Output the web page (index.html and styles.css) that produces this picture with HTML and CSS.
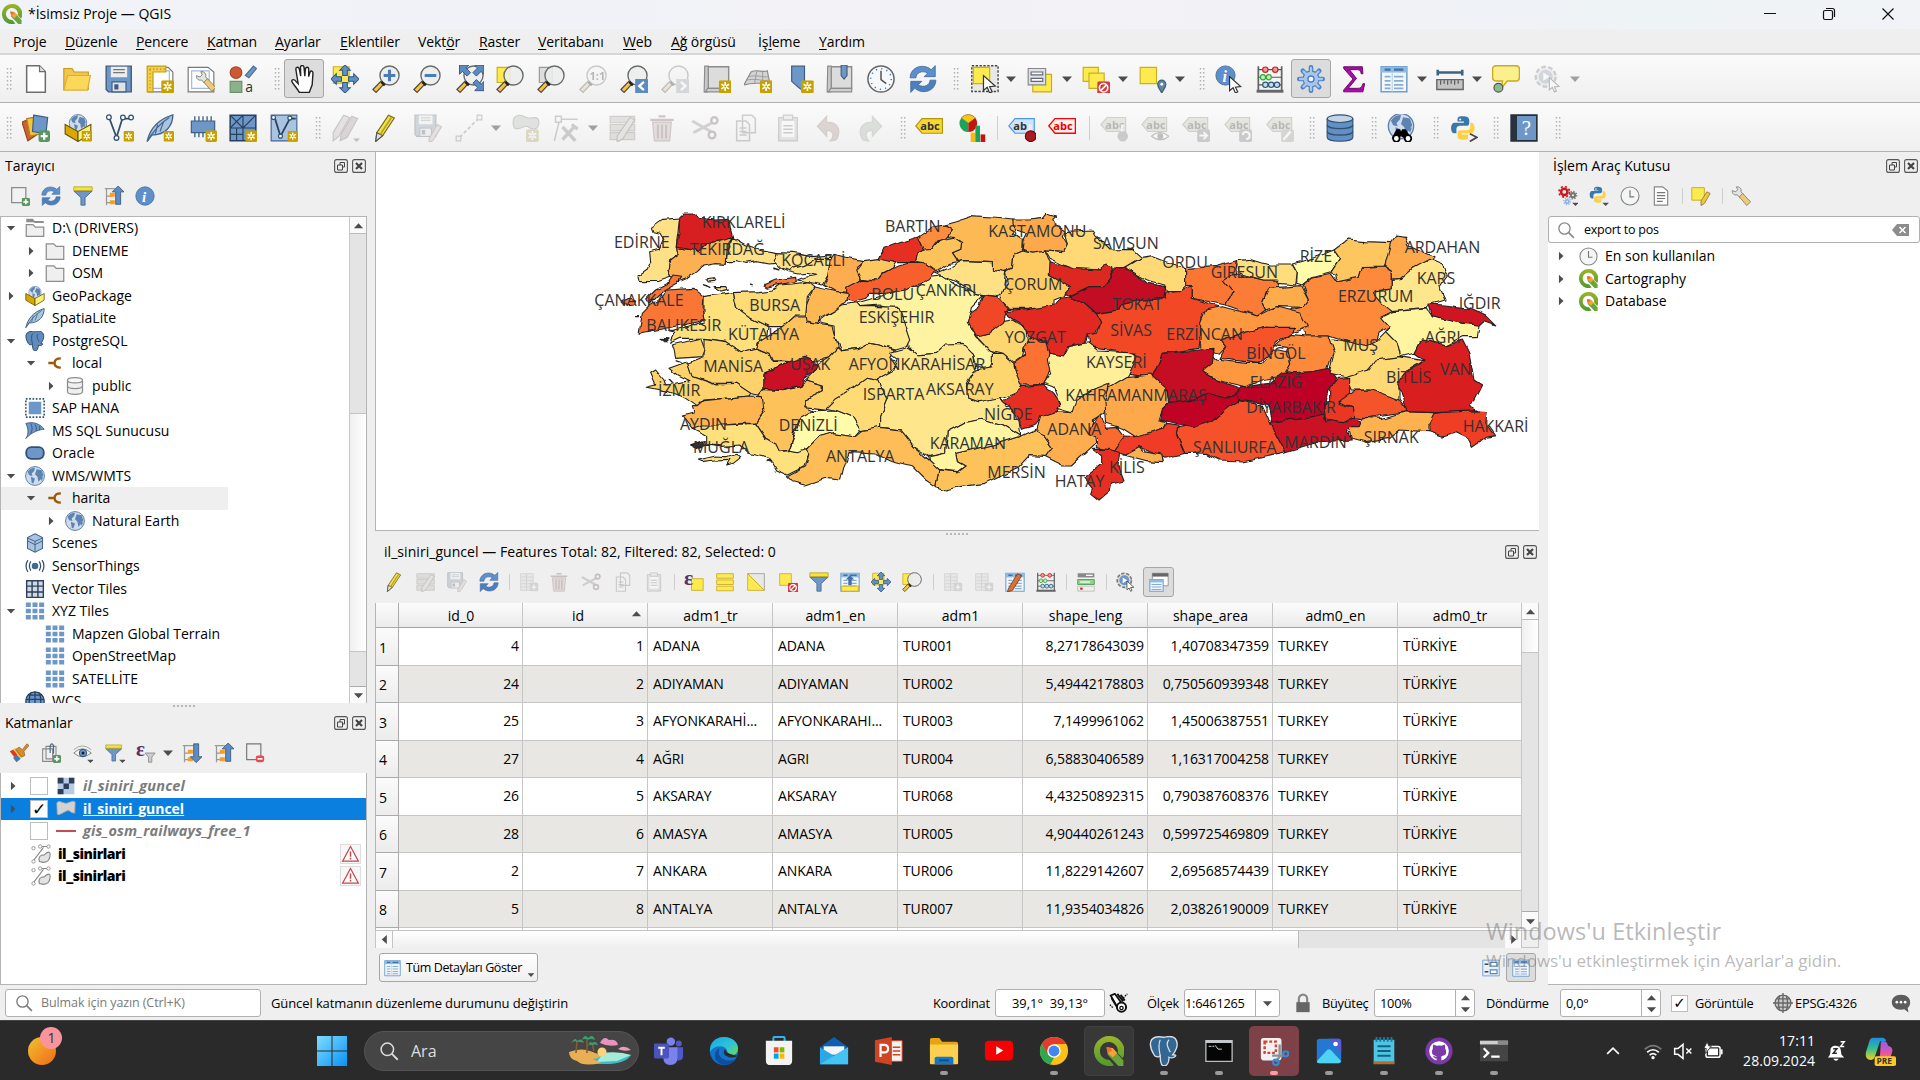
FILE: index.html
```html
<!DOCTYPE html>
<html lang="tr">
<head>
<meta charset="utf-8">
<title>*İsimsiz Proje — QGIS</title>
<link rel="stylesheet" href="styles.css">
</head>
<body>
<svg class="grads" width="0" height="0">
<defs>
<linearGradient id="gw" x1="0" y1="0" x2="1" y2="1"><stop offset="0" stop-color="#7fdcff"/><stop offset="1" stop-color="#0a93f5"/></linearGradient>
<linearGradient id="go" x1="0" y1="0" x2="1" y2="1"><stop offset="0" stop-color="#f2c230"/><stop offset="1" stop-color="#f06a14"/></linearGradient>
<linearGradient id="ge" x1="0" y1="0" x2="1" y2="1"><stop offset="0" stop-color="#1ba5e8"/><stop offset=".55" stop-color="#2cc3d8"/><stop offset="1" stop-color="#6fe04e"/></linearGradient>
<linearGradient id="gq" x1="0" y1="0" x2="0" y2="1"><stop offset="0" stop-color="#9bb52b"/><stop offset="1" stop-color="#4f9a2e"/></linearGradient>
<linearGradient id="gc" x1="0" y1="0" x2="0" y2="1"><stop offset="0" stop-color="#1a8be8"/><stop offset=".5" stop-color="#36c08d"/><stop offset="1" stop-color="#f3d21c"/></linearGradient>
<linearGradient id="gp" x1="0" y1="0" x2="0" y2="1"><stop offset="0" stop-color="#8a62f0"/><stop offset=".5" stop-color="#e254a8"/><stop offset="1" stop-color="#fb8a45"/></linearGradient>
</defs>
</svg>
<svg class="sprite" width="0" height="0">
<symbol id="star" viewBox="0 0 10 10"><rect width="10" height="10" rx="1.2" fill="#c8a000"/><path d="M5 1.5v7M2 3.2l6 3.6M8 3.2L2 6.8" stroke="#fff" stroke-width="1.3"/><circle cx="5" cy="5" r=".8" fill="#c8a000"/></symbol>
<symbol id="plus" viewBox="0 0 10 10"><rect width="10" height="10" rx="2" fill="#5a9660"/><path d="M5 2v6M2 5h6" stroke="#fff" stroke-width="2"/></symbol>
<symbol id="td" viewBox="0 0 12 12"><path d="M1 3.500h10L6 9z" fill="#4d4d4d"/></symbol>
<symbol id="tu" viewBox="0 0 12 12"><path d="M1 9h10L6 3.500z" fill="#4d4d4d"/></symbol>
<symbol id="tr" viewBox="0 0 12 12"><path d="M3.500 1v10L9 6z" fill="#4d4d4d"/></symbol>
<symbol id="tl" viewBox="0 0 12 12"><path d="M8.500 1v10L3 6z" fill="#4d4d4d"/></symbol>
<symbol id="grip" viewBox="0 0 6 22"><path d="M1.500 0v22M4.700 0v22" stroke="#b0b0b0" stroke-width="1.400" stroke-dasharray="1.500 2.500"/></symbol>
<symbol id="qgis" viewBox="0 0 24 24"><path fill="url(#gq)" fill-rule="evenodd" d="M12 0a12 12 0 1 0 4 23.300l-3.600-4.200A7.200 7.200 0 1 1 18.900 13.500l4 4.200A12 12 0 0 0 12 0z"/><path d="M10.500 9.500l4.500.5 8.500 9.500V24h-4L11 15z" fill="#6ba53a"/><path d="M10 9l5 .5 3.500 4-3.500 3.500L11 13.500z" fill="#f5a43a"/><path d="M10 9l3 .3 1.500 2-2.500 2-1.500-1z" fill="#ee6f2d"/></symbol>
<symbol id="new" viewBox="0 0 24 24"><path d="M4 .7h11l5 5v17.600H4z" fill="#fff" stroke="#6d6d6d" stroke-width="1.300"/><path d="M15 .7v5h5" fill="#ddd" stroke="#6d6d6d"/></symbol>
<symbol id="open" viewBox="0 0 24 24"><path d="M.7 21V3h7l2 3h12v15z" fill="#f2c64b" stroke="#c99a1c"/><path d="M.7 21.500L4 9h19.500l-2.500 12.500z" fill="#fbd859" stroke="#dcae34"/></symbol>
<symbol id="save" viewBox="0 0 24 24"><path d="M1 1h21.500v22H3l-2-2z" fill="#6c97c8" stroke="#3f5d7f" stroke-width="1.200"/><path d="M5 1.500h14v9H5z" fill="#ededed"/><path d="M7 4h10M7 6.500h10" stroke="#777"/><path d="M6 14.500h12V23H6z" fill="#dfe3e8" stroke="#3f5d7f"/><path d="M8 16.500h3.500V21H8z" fill="#3f5d7f"/></symbol>
<symbol id="layout" viewBox="0 0 24 24"><path d="M2 2h17l4 4v17H2z" fill="#fff" stroke="#777"/><path d="M5 5h15v15H5z" fill="none" stroke="#9fb9dd"/><path d="M1 1h16v5H6v17H1z" fill="#f4cf45" stroke="#c19d14"/><path d="M3 3.500h13M3.500 4v17" stroke="#a98a15" stroke-dasharray="1 2"/><use href="#star" x="13" y="13" width="11" height="11"/></symbol>
<symbol id="wrench" viewBox="0 0 24 24"><path d="M1.500 5.500l4 1.500 2.500-2.500L6.500 1c4-.5 6.500 2.500 5.500 6l3 3-4.500 4-3-3.500C4 11.500 1 9 1.500 5.500z" fill="#e4e4e0" stroke="#777"/><path d="M10 13l4-4 9.500 10-4.500 4.500z" fill="#eccb7c" stroke="#8d7a48"/></symbol>
<symbol id="mgr" viewBox="0 0 24 24"><path d="M1 2h17l5 4v17H1z" fill="#fff" stroke="#777"/><path d="M4 5h15v15H4z" fill="none" stroke="#9fb9dd"/><use href="#wrench" x="7" y="4" width="18" height="20"/></symbol>
<symbol id="style" viewBox="0 0 24 24"><circle cx="6" cy="6.500" r="5" fill="#cb5a34" stroke="#a94627"/><path d="M1 14h10v9.500H1z" fill="#8bb08a" stroke="#6c906c"/><path d="M14 9L21 1l2.500 2L17 11z" fill="#6c97c8" stroke="#4a6d99"/><text x="14" y="23.500" font-size="12" class="gl">a</text></symbol>
<symbol id="hand" viewBox="0 0 24 24"><path d="M8 23.500c-2-4-5.500-7-6.500-9.500 0-2 2.500-2 4 .5L7 16 5 3.500c0-2 2.500-2.200 3 0l1.200 6L9 1.800c.2-1.800 2.600-1.800 3 0l.7 7.700.6-6.500c.5-1.600 2.500-1.400 2.700.2L16 10l1.200-4c.8-1.500 2.500-.8 2.500 1L19 17l-2.500 6.500z" fill="#fff" stroke="#222" stroke-width="1.200"/></symbol>
<symbol id="arr4" viewBox="0 0 24 24"><path d="M12 0l4.500 4.500H14V9h-4V4.500H7.500zM12 24l4.500-4.500H14V15h-4v4.500H7.500zM0 12l4.500-4.500V10H9v4H4.500v2.500zM24 12l-4.500-4.500V10H15v4h4.500v2.500z" fill="#6090c8" stroke="#37587e" stroke-width=".9"/></symbol>
<symbol id="pansel" viewBox="0 0 24 24"><path d="M2 1.500h13.500v14H2z" fill="#fdea4e" stroke="#c9b022"/><use href="#arr4"/></symbol>
<symbol id="lens" viewBox="0 0 24 24"><path d="M.8 21L8 13.500l2.500 2.500L3.500 23.500z" fill="#f4c63d" stroke="#544"/><circle cx="15" cy="9" r="8.200" fill="#eceeee" fill-opacity=".88" stroke="#6b6b6b" stroke-width="1.200"/><path d="M8 14.500l3 3" stroke="#222" stroke-width="2.200"/></symbol>
<symbol id="zin" viewBox="0 0 24 24"><use href="#lens"/><path d="M15 4v10M10 9h10" stroke="#4a7db8" stroke-width="2.600"/></symbol>
<symbol id="zout" viewBox="0 0 24 24"><use href="#lens"/><path d="M10 9h10" stroke="#4a7db8" stroke-width="2.600"/></symbol>
<symbol id="zfull" viewBox="0 0 24 24"><use href="#lens"/><path d="M3 0h8L8.500 2.500l4 4-3 3-4-4L3 8zM24 0h-8l2.500 2.500-4 4 3 3 4-4L24 8zM24 22v-8l-2.500 2.500-4-4-3 3 4 4L16 22z" fill="#5b8bc2" stroke="#35557c" stroke-width=".8"/></symbol>
<symbol id="zsel" viewBox="0 0 24 24"><path d="M1 2h11v13H1z" fill="#fdea4e" stroke="#c9b022"/><use href="#lens"/></symbol>
<symbol id="zlay" viewBox="0 0 24 24"><path d="M2 2h11v13H2z" fill="#ddd" stroke="#999"/><use href="#lens"/></symbol>
<symbol id="z11" viewBox="0 0 24 24"><use href="#lens"/><text x="9" y="13" font-size="9.500" class="gl b">1:1</text></symbol>
<symbol id="zlast" viewBox="0 0 24 24"><use href="#lens"/><path d="M13 12h11v12H13z" fill="#5b8bc2"/><path d="M20.500 14.500l-4 3.500 4 3.500" fill="none" stroke="#fff" stroke-width="2"/></symbol>
<symbol id="znext" viewBox="0 0 24 24"><use href="#lens"/><path d="M13 12h11v12H13z" fill="#8ba0b8"/><path d="M17 14.500l4 3.500-4 3.500" fill="none" stroke="#fff" stroke-width="2"/></symbol>
<symbol id="map" viewBox="0 0 24 24"><path d="M4.500 1.500H22V20H4.500z" fill="#dcdcdc" stroke="#8c8c8c" stroke-width="1.200"/><path d="M1.500 1h3v19l-.5 3h-3z" fill="#c8c8c8" stroke="#8c8c8c"/><path d="M4 20h18v3H2z" fill="#cfcfcf" stroke="#8c8c8c"/></symbol>
<symbol id="nmap" viewBox="0 0 24 24"><use href="#map"/><use href="#star" x="13.500" y="13" width="11" height="11"/></symbol>
<symbol id="n3d" viewBox="0 0 24 24"><path d="M6 6c5-3 10 1 14-1l2 10c-7 2-12-1-22 2z" fill="#d4d4d4" stroke="#8c8c8c"/><path d="M11 5l-2 11M16 5v11M4 10c7-2 12 1 17 0M2 13c8-2 13 1 19 0" fill="none" stroke="#999" stroke-width=".8"/><use href="#star" x="13.500" y="13" width="11" height="11"/></symbol>
<symbol id="nbm" viewBox="0 0 24 24"><path d="M4 1h11v22l-5.500-4L4 14z" fill="#6c97c8" stroke="#3f5d7f"/><use href="#star" x="12" y="13" width="11" height="11"/></symbol>
<symbol id="sbm" viewBox="0 0 24 24"><use href="#map"/><path d="M13 0h5v9l-2.500 3L13 9z" fill="#6c97c8" stroke="#3f5d7f"/></symbol>
<symbol id="clock" viewBox="0 0 24 24"><circle cx="12" cy="12" r="11.200" fill="#f6f8fa" stroke="#666" stroke-width="1.300"/><circle cx="12" cy="12" r="8.800" fill="none" stroke="#3b78b8" stroke-width="1.300" stroke-dasharray="1 3.600"/><path d="M12 5v7.500l4.500 3.500" fill="none" stroke="#555" stroke-width="1.300"/></symbol>
<symbol id="sync" viewBox="0 0 24 24"><path d="M1 11C1 2 12-2 19 4l3.500-3.500V10H13l3-3C11 4 6 7 6 11z" fill="#5c8fcb" stroke="#41699a" stroke-width=".7"/><path d="M23 13c0 9-11 13-18 7l-3.500 3.500V14H11l-3 3c5 3 10 0 10-4z" fill="#4c7fc0" stroke="#41699a" stroke-width=".7"/></symbol>
<symbol id="cur" viewBox="0 0 12 16"><path d="M1 1v12l3-2.500L6 15l2-1-2-4 4.500-.5z" fill="#fff" stroke="#333"/></symbol>
<symbol id="sel" viewBox="0 0 24 24"><path d="M.7.700h22.500v22H.7z" fill="#e8e8e8" stroke="#444" stroke-width="1.200" stroke-dasharray="2 1.300"/><path d="M2 2h14v14H2z" fill="#fdea4e" stroke="#c9b022"/><use href="#cur" x="9" y="8" width="14" height="17"/></symbol>
<symbol id="self" viewBox="0 0 24 24"><path d="M5 8h16v15H5z" fill="#fdea4e" stroke="#c9a822"/><path d="M1 3h15v14H1z" fill="#dde2e8" stroke="#888"/><path d="M3.500 6h10v2.500h-10zM3.500 11.500h10V14h-10z" fill="#fff" stroke="#667"/></symbol>
<symbol id="desel" viewBox="0 0 24 24"><path d="M1 2h13v12H1z" fill="#fdea4e" stroke="#c9b022"/><path d="M6 7h13v13H6z" fill="#fdea4e" stroke="#c9b022"/><use href="#ban" x="13" y="14" width="11" height="11"/></symbol>
<symbol id="ban" viewBox="0 0 11 11"><rect width="11" height="11" rx="1.500" fill="#d9363c"/><circle cx="5.500" cy="5.500" r="3.600" fill="none" stroke="#fff" stroke-width="1.400"/><path d="M3 8l5-5" stroke="#fff" stroke-width="1.400"/></symbol>
<symbol id="desel1" viewBox="0 0 24 24"><path d="M2 2h14v14H2z" fill="#fdea4e" stroke="#c9b022"/><use href="#ban" x="12" y="13" width="12" height="12"/></symbol>
<symbol id="loc" viewBox="0 0 24 24"><path d="M1 2h14v14H1z" fill="#fdea4e" stroke="#c9b022"/><path d="M19.500 24c-2-4-3.500-5-3.500-7.500a3.500 3.500 0 0 1 7 0c0 2.500-1.500 3.500-3.500 7.500z" fill="#5d88a6" stroke="#3d6078"/><circle cx="19.500" cy="16.500" r="1.200" fill="#fff"/></symbol>
<symbol id="info" viewBox="0 0 24 24"><circle cx="12" cy="12" r="11" fill="#5e8fca" stroke="#44719f"/><text x="8.500" y="19" font-size="18" class="ser">i</text></symbol>
<symbol id="ident" viewBox="0 0 24 24"><use href="#info" x="0" y="0" width="18" height="18"/><use href="#cur" x="11" y="9" width="13" height="16"/></symbol>
<symbol id="abac" viewBox="0 0 24 24"><path d="M2 1v22M22 1v22" stroke="#666" stroke-width="1.500"/><path d="M2 4h20M2 10.500h20M2 17h20" stroke="#555"/><path d="M.5 22.500h23" stroke="#666" stroke-width="2.500"/><g fill="#e99" stroke="#c22"><circle cx="8" cy="4" r="2.300"/><circle cx="16.500" cy="4" r="2.300"/></g><g fill="#bdf0bd" stroke="#3a3"><circle cx="6" cy="10.500" r="2.200"/><circle cx="11" cy="10.500" r="2.200"/></g><g fill="#bcdcf5" stroke="#357"><circle cx="8" cy="17" r="2.300"/><circle cx="13" cy="17" r="2.300"/><circle cx="18" cy="17" r="2.300"/></g></symbol>
<symbol id="gear" viewBox="0 0 24 24"><g stroke="#4d80c4" stroke-width="4" stroke-linecap="round"><path d="M12 2v20M2 12h20M5 5l14 14M19 5L5 19"/></g><circle cx="12" cy="12" r="6.800" fill="#a9c6ea" stroke="#4d80c4"/><g stroke="#a9c6ea" stroke-width="2" stroke-linecap="round"><path d="M12 2.500v4M12 17.500v4M2.500 12h4M17.500 12h4M5.500 5.500l3 3M15.500 15.500l3 3M18.500 5.500l-3 3M8.500 15.500l-3 3"/></g><circle cx="12" cy="12" r="2.600" fill="#f3f6fb" stroke="#4d80c4" stroke-width="1.200"/></symbol>
<symbol id="sigma" viewBox="0 0 24 24"><path d="M4 1.500h16l.5 6H19c-.5-3-1.500-3.500-4-3.500H9l6 7.500-7 8.500h8c3 0 3.500-1 4.500-4H22l-1.500 7H4v-1.500l8-9.500-8-9z" fill="#a50da5" stroke="#650865" stroke-width=".8"/></symbol>
<symbol id="tab" viewBox="0 0 24 24"><path d="M1 1.500h22v21.500H1z" fill="#f3f7fb" stroke="#6fa0cc" stroke-width="1.300"/><path d="M1 1.500h22v5H1z" fill="#8fbbe2"/><path d="M4 4h5M12 4h8" stroke="#3e72ac" stroke-width="1.800"/><path d="M4 10h5M12 10h8M4 13.500h5M12 13.500h8M4 17h5M12 17h8M4 20h5M12 20h8" stroke="#86add2" stroke-width="1.500"/><path d="M10.500 6v17" stroke="#bcd3e8"/></symbol>
<symbol id="meas" viewBox="0 0 24 24"><path d="M1.500 6.500h21M1.500 4v5M22.500 4v5" stroke="#3d6488" stroke-width="2.200"/><path d="M.7 12.500h22.600v8.500H.7z" fill="#c4c4c4" stroke="#666" stroke-width="1.200"/><path d="M4 13v4M7 13v3M10 13v4M13 13v3M16 13v4M19 13v3" stroke="#555"/></symbol>
<symbol id="tips" viewBox="0 0 24 24"><path d="M3.500.7h17q3 0 3 3v7q0 3-3 3H13L8 20l1-6.300H3.500q-3 0-3-3v-7q0-3 3-3z" fill="#fcf08e" stroke="#c9a822" stroke-width="1.200"/><circle cx="5.500" cy="19.500" r="3.800" fill="#8bbb8a" stroke="#555"/></symbol>
<symbol id="act" viewBox="0 0 24 24"><circle cx="10" cy="10" r="8.500" fill="#ddd" stroke="#777" stroke-width="2" stroke-dasharray="4 2"/><circle cx="10" cy="10" r="6" fill="#6c97c8"/><path d="M8 6.500v7l5.500-3.500z" fill="#fff"/><use href="#cur" x="12" y="10" width="11" height="14"/></symbol>
<symbol id="dsm" viewBox="0 0 24 24"><path d="M0 7l9-4 5 14-9 6z" fill="#cd6133" stroke="#96441f"/><path d="M4 4l11-2 1 15-9 2z" fill="#f2c53a" stroke="#a98720"/><path d="M10 1l12 2-1.500 14L9 15z" fill="#6c97c8" stroke="#3f5d7f"/><use href="#plus" x="14" y="14" width="10" height="10"/></symbol>
<symbol id="globe" viewBox="0 0 24 24"><circle cx="12" cy="12" r="11.300" fill="#cfdcec" stroke="#5c82aa" stroke-width="1.200"/><path d="M3 7c3-4 6-5 9-5l-1 4-3 3 1 3-4-1zM7 13l5 2-2 6-2-1zM14 4l6 1 2 6-3 5-3 3-1-6-3-3zM19 15l3-2-2 5z" fill="#5d83b3"/></symbol>
<symbol id="gpkgb" viewBox="0 0 24 24"><use href="#globe" x="4" y="0" width="16" height="16"/><path d="M1 9l11 6v8.500L1 17z" fill="#d9a900" stroke="#6b5612"/><path d="M23 9l-11 6v8.500L23 17z" fill="#fbf07a" stroke="#6b5612"/></symbol>
<symbol id="gpkg" viewBox="0 0 24 24"><use href="#gpkgb"/><use href="#star" x="15" y="14" width="9" height="10"/></symbol>
<symbol id="shp" viewBox="0 0 24 24"><path d="M3 4l6 16 5-16h8" fill="none" stroke="#33516f" stroke-width="1.500"/><g fill="#fff" stroke="#33516f" stroke-width="1.100"><circle cx="2.500" cy="2.800" r="2"/><circle cx="9" cy="20.500" r="2"/><circle cx="14.500" cy="3" r="2"/><circle cx="21.500" cy="3" r="2"/></g><use href="#star" x="15" y="14" width="9" height="10"/></symbol>
<symbol id="fea0" viewBox="0 0 24 24"><path d="M1 23.500C3 14 9 5 23 .7 23 10 17 18 5 18z" fill="#a9c3e1" stroke="#44678e" stroke-width="1.200"/><path d="M1 23.500C6 15 12 8 20 3M8 17l2-8M12 15l3-8" fill="none" stroke="#44678e"/></symbol>
<symbol id="fea" viewBox="0 0 24 24"><use href="#fea0"/><use href="#star" x="15" y="14" width="9" height="10"/></symbol>
<symbol id="mem" viewBox="0 0 24 24"><path d="M5 2v18M8.500 2v18M12 2v18M15.500 2v18M19 2v18" stroke="#44678e" stroke-width="1.200"/><path d="M2 6h20v10H2z" fill="#6c97c8" stroke="#3f5d7f"/><use href="#star" x="14" y="14" width="10" height="10"/></symbol>
<symbol id="mesh" viewBox="0 0 24 24"><path d="M1 1h22v22H1z" fill="#6c97c8" stroke="#27415f" stroke-width="1.300"/><path d="M1 12h22M12 1v22M1 1l11 11M12 1L1 12M12 12L23 1M1 17.500h11M6.500 12v11" fill="none" stroke="#27415f"/><use href="#star" x="14" y="14" width="10" height="10"/></symbol>
<symbol id="vtx" viewBox="0 0 24 24"><path d="M1 1h22v22H1z" fill="#a9c3e1" stroke="#44678e"/><path d="M4 3l5 16 8-15h5" fill="none" stroke="#27415f" stroke-width="1.500"/><g fill="#fff" stroke="#33516f"><circle cx="3" cy="3" r="1.700"/><circle cx="9" cy="19" r="1.700"/><circle cx="17" cy="3.500" r="1.700"/></g><use href="#star" x="15" y="14" width="9" height="10"/></symbol>
<symbol id="pen" viewBox="0 0 24 24"><path d="M5 16L15 1l5 2.500-10 15-6 5z" fill="#f3df4c" stroke="#75691b"/><path d="M5 16l5 2.500-6 5z" fill="#ddd" stroke="#555"/><path d="M8 17.500L17.500 3" stroke="#b69f20" stroke-width="1.400"/></symbol>
<symbol id="pens" viewBox="0 0 24 24"><path d="M1 16L10 1l5 2-9 16-5 4z" fill="#c9b9b2" stroke="#857"/><path d="M8 17L17 2l5 2-9 16-6 3z" fill="#a9958e" stroke="#857"/><path d="M18 21h6l-3 3z" fill="#555"/></symbol>
<symbol id="savee" viewBox="0 0 24 24"><use href="#save" width="20" height="20"/><path d="M13 21l7-12 3.500 2L16 23l-3 1z" fill="#d9b9b0" stroke="#966"/></symbol>
<symbol id="dig" viewBox="0 0 24 24"><path d="M4 20L20 4" stroke="#777" stroke-width="1.500" stroke-dasharray="3 2"/><path d="M1 19h4v4H1zM19 1h4v4h-4z" fill="#eee" stroke="#777"/></symbol>
<symbol id="poly" viewBox="0 0 24 24"><path d="M1 7c0-8 8-6 11-4s11-3 11 4-6 7-9 4-13 8-13-4z" fill="#a8bda8" stroke="#777"/><use href="#star" x="12" y="13" width="11" height="11"/></symbol>
<symbol id="vert" viewBox="0 0 24 24"><path d="M3 2h5v5H3zM6 7L2 23M8 4.500h14" fill="none" stroke="#777" stroke-width="1.300"/><path d="M9 11l11 12M20 10L9 22M17 9l5 4" fill="none" stroke="#777" stroke-width="3"/></symbol>
<symbol id="mult" viewBox="0 0 24 24"><path d="M1 2h21v5.500H1zM1 9h21v5.500H1zM1 16h21v6H1z" fill="#bdb592" stroke="#877"/><path d="M7 19L18 3l4 2-10 16-5 3z" fill="#d2c2ba" stroke="#755"/></symbol>
<symbol id="trash" viewBox="0 0 24 24"><path d="M4 7h16l-1.500 16h-13z" fill="#dba7a7" stroke="#a55"/><path d="M2 5h20M9 2h6M8.500 9v12M12 9v12M15.500 9v12" stroke="#a55" stroke-width="1.800"/></symbol>
<symbol id="cut" viewBox="0 0 24 24"><path d="M1 6l16 9M2 16L19 7" stroke="#888" stroke-width="2.500"/><circle cx="20" cy="5.500" r="2.700" fill="none" stroke="#855" stroke-width="2"/><circle cx="18" cy="18" r="2.900" fill="none" stroke="#855" stroke-width="2"/></symbol>
<symbol id="copy" viewBox="0 0 24 24"><path d="M9 1h8l3 3v12H9zM4 6h8l3 3v14H4z" fill="#f3f3f3" stroke="#777" stroke-width="1.300"/><path d="M6.500 12h6M6.500 15h6M6.500 18h6" stroke="#777" stroke-width="1.400"/></symbol>
<symbol id="paste" viewBox="0 0 24 24"><path d="M4 3h16v20H4z" fill="#bbb" stroke="#777"/><path d="M6.500 6h11v14h-11z" fill="#fff"/><path d="M8 1h8v4H8z" fill="#ddd" stroke="#777"/><path d="M8 10h8M8 13h8M8 16h8" stroke="#777" stroke-width="1.300"/></symbol>
<symbol id="undo" viewBox="0 0 24 24"><path d="M10 2v5c8 0 13 5 9 14-1 2-4 2-6 2 4-4 3-9-3-9v5L2 10.500z" fill="#c08a70" stroke="#a87a60"/></symbol>
<symbol id="redo" viewBox="0 0 24 24"><path d="M14 2v5C6 7 1 12 5 21c1 2 4 2 6 2-4-4-3-9 3-9v5l8-8.500z" fill="#9fb29b" stroke="#8a9c86"/></symbol>
<symbol id="lab" viewBox="0 0 24 24"><path d="M6 4h17.500v12.500H6L.7 10.200z" fill="#f8d733" stroke="#b2950f"/><text x="4.500" y="13.500" font-size="9.500" class="gl b">abc</text></symbol>
<symbol id="labr" viewBox="0 0 24 24"><path d="M6 4h17.500v12.500H6L.7 10.200z" fill="#fff0f0" stroke="#f00" stroke-width="1.200"/><text x="4.500" y="13.500" font-size="9.500" class="gl b red">abc</text></symbol>
<symbol id="labp" viewBox="0 0 24 24"><path d="M6 4h16.500v12.500H6L.7 10.200z" fill="#cfe5ff" stroke="#4896e8"/><text x="4.500" y="13.500" font-size="9.500" class="gl b">ab</text><path d="M19 9v8" stroke="#eee" stroke-width="2.500"/><circle cx="19.500" cy="19" r="4.600" fill="#a81c20" stroke="#700"/></symbol>
<symbol id="labg" viewBox="0 0 24 24"><path d="M6 3h16v12H6L.7 9z" fill="#c8c49a" stroke="#88845c"/><text x="4.500" y="12.500" font-size="9.500" class="gl b">abc</text></symbol>
<symbol id="g1" viewBox="0 0 24 24"><use href="#labg"/><circle cx="19.500" cy="19" r="4.500" fill="#777"/><path d="M19 9v6" stroke="#eee" stroke-width="2.500"/></symbol>
<symbol id="g2" viewBox="0 0 24 24"><use href="#labg"/><path d="M9 19q7-6 15 0-7 6-15 0z" fill="#fff" stroke="#555"/><circle cx="16.500" cy="19" r="2.500" fill="#555"/></symbol>
<symbol id="g3" viewBox="0 0 24 24"><use href="#labg"/><rect x="13" y="13" width="11" height="11" rx="1.500" fill="#777"/><path d="M15 18.500h6M18.500 15.500l3 3-3 3" stroke="#fff" stroke-width="1.700" fill="none"/></symbol>
<symbol id="g4" viewBox="0 0 24 24"><use href="#labg"/><rect x="13" y="13" width="11" height="11" rx="1.500" fill="#777"/><path d="M16 18a3 3 0 1 1 3 3.500" stroke="#fff" stroke-width="1.700" fill="none"/></symbol>
<symbol id="g5" viewBox="0 0 24 24"><use href="#labg"/><rect x="13" y="13" width="11" height="11" rx="1.500" fill="#998"/><path d="M15 22l6-7" stroke="#fff" stroke-width="2" fill="none"/></symbol>
<symbol id="dia" viewBox="0 0 24 24"><path d="M8 8L2 3.500A7.500 7.500 0 0 1 14 3.500z" fill="#f8c812" stroke="#744" stroke-width=".5"/><path d="M8 8V15.500A7.500 7.500 0 0 1 2 3.500z" fill="#18a558"/><path d="M8 8V15.500A7.500 7.500 0 0 0 14 3.500z" fill="#c0140f"/><path d="M10 16h4v8h-4z" fill="#f8b812"/><path d="M14 10h4v14h-4z" fill="#18a558"/><path d="M18.500 17.500h4V24h-4z" fill="#c0140f"/></symbol>
<symbol id="db" viewBox="0 0 24 24"><path d="M1 4v16c0 4.500 22 4.500 22 0V4" fill="#6090c6" stroke="#33516f"/><ellipse cx="12" cy="4" rx="11" ry="3.300" fill="#c3d4e8" stroke="#33516f"/><path d="M1 9.500c0 4 22 4 22 0M1 15c0 4 22 4 22 0" fill="none" stroke="#33516f" stroke-width="1.200"/></symbol>
<symbol id="msrch" viewBox="0 0 24 24"><use href="#globe" x="0" y="-1" width="24" height="23"/><path d="M8 13l3 0 1 2 1-2h3l5 8h-6l-3-2-3 2H4z" fill="#000"/><g fill="#fff" stroke="#000" stroke-width="1.500"><circle cx="8" cy="21" r="2.800"/><circle cx="18" cy="21" r="2.800"/></g></symbol>
<symbol id="py" viewBox="0 0 24 24"><path d="M12 1c-5 0-5 1-5 5h6v1H4c-4 0-4 10 0 10h2v-3c0-3 1-4 4-4h5c2 0 3-1 3-3V5c0-3-2-4-6-4z" fill="#3a78ac"/><path d="M12 23c5 0 5-1 5-5h-6v-1h9c4 0 4-10 0-10h-1v4c0 2-1 3-4 3h-5c-2 0-3 1-3 3v3c0 2 2 3 5 3z" fill="#fed143"/><circle cx="9.500" cy="4" r="1" fill="#fff"/></symbol>
<symbol id="pyd" viewBox="0 0 24 24"><use href="#py" width="21" height="21"/><path d="M16 20h8l-4 4z" fill="#4d4d4d"/></symbol>
<symbol id="pyc" viewBox="0 0 24 24"><use href="#py" width="22" height="24"/><path d="M17 17l6 3-6 3.500" fill="none" stroke="#444" stroke-width="1.500"/></symbol>
<symbol id="help" viewBox="0 0 24 24"><path d="M1 1h22v22H1z" fill="#6c97c8" stroke="#262d38" stroke-width="1.400"/><path d="M1.500 1.500H6v21H1.500z" fill="#27343f"/><text x="10" y="18" font-size="18" class="ser n">?</text></symbol>
<symbol id="addl" viewBox="0 0 24 24"><path d="M2 2h17v18H2z" fill="#f2f2f2" stroke="#8a8a8a" stroke-width="1.500"/><use href="#plus" x="14" y="14" width="10" height="10"/></symbol>
<symbol id="filt" viewBox="0 0 24 24"><path d="M1 6h22l-8.500 8v9h-5v-9z" fill="#6c97c8" stroke="#44678e"/><path d="M1 1h22v4.500H1z" fill="#f8e33e" stroke="#b5a31c"/></symbol>
<symbol id="coll" viewBox="0 0 24 24"><path d="M1 3h12M3 3v20M3 12h6M3 20h6" stroke="#999" stroke-width="1.500"/><path d="M7 8h6v5H7zM7 17h6v5H7z" fill="#f59f2a"/><path d="M17 0l7 7h-4v15h-6V7h-4z" fill="#5b8bc2" stroke="#35557c"/></symbol>
<symbol id="expd" viewBox="0 0 24 24"><path d="M1 3h13M3 3v20M3 12h6M3 20h6" stroke="#999" stroke-width="1.500"/><path d="M7 8h6v5H7zM7 17h6v5H7z" fill="#f59f2a"/><path d="M17 23.500l7-7h-4V1h-6v15.500h-4z" fill="#5b8bc2" stroke="#35557c"/></symbol>
<symbol id="fold" viewBox="0 0 24 24"><path d="M1.500 22V3.500h9l3 3h9V22z" fill="#efefef" stroke="#8d8d8d" stroke-width="1.500"/></symbol>
<symbol id="drv" viewBox="0 0 24 24"><path d="M1.500 5V1h8l2 2.500h11V6H12l-2-1z" fill="#8d8d8d"/><path d="M1.500 22V8h8l3 3h10v11z" fill="#efefef" stroke="#8d8d8d" stroke-width="1.500"/></symbol>
<symbol id="pg" viewBox="0 0 24 24"><path d="M5 1c3-1 5 0 7 0s6-2 9 1c3 4 1 9-2 13 3 0 3 1 1 2s-4 0-4 0c0 3-1 7-4 7-2 0-3-3-3-8-1 1-4 1-5-1C1 10-1 3 5 1z" fill="#5f8cbd" stroke="#2f4c6e" stroke-width="1.200"/><path d="M9 3c-2 4-1 8 0 13M16 3c-3 3-1 6 1 10" fill="none" stroke="#2f4c6e"/></symbol>
<symbol id="pgt" viewBox="0 0 24 24"><path d="M5 1c3-1 5 0 7 0s6-2 9 1c3 4 1 9-2 13 3 0 3 1 1 2s-4 0-4 0c0 3-1 7-4 7-2 0-3-3-3-8-1 1-4 1-5-1C1 10-1 3 5 1z" fill="#336791" stroke="#d5dde6" stroke-width="1.100"/><path d="M9 3c-2 4-1 8 0 13M16 3c-3 3-1 6 1 10" fill="none" stroke="#d5dde6"/></symbol>
<symbol id="conn" viewBox="0 0 24 24"><path d="M4 12h7M19 6.500c-6 0-7.500 2-7.500 5.500s1.500 5.500 7.500 5.500" fill="none" stroke="#9a5a06" stroke-width="2.800"/></symbol>
<symbol id="sch" viewBox="0 0 24 24"><path d="M3 5v14c0 4 18 4 18 0V5" fill="#f0f0f0" stroke="#8d8d8d" stroke-width="1.500"/><ellipse cx="12" cy="5" rx="9" ry="3.200" fill="#f8f8f8" stroke="#8d8d8d" stroke-width="1.500"/><path d="M3 12c0 4 18 4 18 0" fill="none" stroke="#8d8d8d" stroke-width="1.500"/></symbol>
<symbol id="hana" viewBox="0 0 24 24"><path d="M4.500 4.500h15v15h-15z" fill="#6c97c8"/><path d="M1 1h22v22H1z" fill="none" stroke="#33516f" stroke-width="2" stroke-dasharray="2 2"/></symbol>
<symbol id="ms" viewBox="0 0 24 24"><path d="M1 3c9-3 18 1 22 7-5 0-15 3-22 11 4-6 3-12 0-18z" fill="#6c97c8" stroke="#33516f"/><path d="M7 3c2 4 2 8 0 12M12 4c2 3 2 6 1 8M17 6c1 2 1 3 0 5" fill="none" stroke="#33516f"/></symbol>
<symbol id="ora" viewBox="0 0 24 24"><rect x="1.500" y="5" width="21" height="14" rx="6" fill="#6c97c8" stroke="#33516f" stroke-width="2.200"/></symbol>
<symbol id="scene" viewBox="0 0 24 24"><path d="M12 1l9 4.500v13L12 23l-9-4.500v-13z" fill="#a9c3e1" stroke="#44678e" stroke-width="1.300"/><path d="M3 6l9 4 9-4M12 10v13M3 9.500L12 14l9-4.500" fill="none" stroke="#44678e" stroke-width="1.200"/></symbol>
<symbol id="sens" viewBox="0 0 24 24"><circle cx="12" cy="12" r="4" fill="#44678e"/><path d="M7 6.500q-3.500 5.500 0 11M3.500 5q-4.500 7 0 14M17 6.500q3.500 5.500 0 11M20.500 5q4.500 7 0 14" fill="none" stroke="#33516f" stroke-width="1.500"/></symbol>
<symbol id="vt" viewBox="0 0 24 24"><path d="M2 2h20v20H2zM8.500 2v20M15.500 2v20M2 8.500h20M2 15.500h20" fill="#cfdae8" stroke="#2f4058" stroke-width="1.700"/></symbol>
<symbol id="xyz" viewBox="0 0 24 24"><path d="M1 4.500h22M1 12h22M1 19.500h22" stroke="#6c97c8" stroke-width="5.500" stroke-dasharray="6 2"/></symbol>
<symbol id="wcs" viewBox="0 0 24 24"><circle cx="12" cy="12" r="11" fill="#6c97c8" stroke="#27415f" stroke-width="1.500"/><path d="M1 10h22M4 5h16M12 1v22M7 2q-4 10 0 20M17 2q4 10 0 20" fill="none" stroke="#27415f" stroke-width="1.500"/></symbol>
<symbol id="brush" viewBox="0 0 24 24"><path d="M1 10l7-4 8 9-7 8z" fill="#f4c43c"/><path d="M1 10l4-2 5 6-3 3z" fill="#d33"/><path d="M5 18l4-4 5 5-5 4z" fill="#47b"/><path d="M8 8l4-3 4 3 5.500-7 2.500 2-6 7 1 5-4 2z" fill="#d98a2d" stroke="#8c5a1c" stroke-width=".8"/></symbol>
<symbol id="grp" viewBox="0 0 24 24"><path d="M2 7h12v15H2zM6 4h12v15H6z" fill="#f0f0f0" stroke="#888" stroke-width="1.300"/><path d="M11 12V3q2-4 4 0v10" fill="none" stroke="#44678e" stroke-width="1.400"/><use href="#plus" x="14" y="14" width="10" height="10"/></symbol>
<symbol id="eye" viewBox="0 0 24 24"><path d="M1 12Q11 2 22 12 11 21 1 12z" fill="#f8f8f8" stroke="#888" stroke-width="1.200"/><circle cx="12" cy="12" r="4.500" fill="#6c97c8" stroke="#27415f"/><circle cx="12" cy="12" r="1.800" fill="#123"/><path d="M1 8Q11-1 22 8" fill="none" stroke="#999"/><path d="M17 20h8l-4 4z" fill="#4d4d4d"/></symbol>
<symbol id="filtd" viewBox="0 0 24 24"><use href="#filt" width="21" height="24"/><path d="M17 20h8l-4 4z" fill="#4d4d4d"/></symbol>
<symbol id="eps" viewBox="0 0 24 24"><text x="0" y="15" font-size="25" class="ser eps">ε</text><path d="M11 12h12l-4 5v6h-4v-6z" fill="#ccc" stroke="#888"/></symbol>
<symbol id="rem" viewBox="0 0 24 24"><path d="M2 1h17v19H2z" fill="#eee" stroke="#777" stroke-width="1.400"/><rect x="13" y="15" width="10" height="8" rx="2.500" fill="#e44b50"/><path d="M15 19h6" stroke="#fff" stroke-width="2"/></symbol>
<symbol id="ras" viewBox="0 0 24 24"><path d="M2 2h20v20H2z" fill="#b9cbe2"/><path d="M2 2h7v7H2zM15.500 2H22v7h-6.500zM9 9h6.500v6.500H9zM2 15.500h7V22H2z" fill="#2b4058"/></symbol>
<symbol id="pol" viewBox="0 0 24 24"><path d="M1 5c2-5 8 1 12 0s8-4 10-1l-.5 13c-5 0-6-4-9-3S2 21 1.500 18z" fill="#d2d2d2" stroke="#a5a5a5"/></symbol>
<symbol id="line" viewBox="0 0 24 24"><path d="M0 12h24" stroke="#bf4f55" stroke-width="2.500"/></symbol>
<symbol id="vec" viewBox="0 0 24 24"><path d="M3 20L15 4M10 3h10" stroke="#888" stroke-width="1.300"/><path d="M10 21q-2-8 6-8 6-6 7-1 0 10-8 10z" fill="#e3e3e3" stroke="#888" stroke-width="1.300"/><g fill="#fff" stroke="#888"><circle cx="3" cy="5" r="2"/><circle cx="3" cy="21" r="2"/><circle cx="11" cy="3" r="2"/><circle cx="21" cy="3" r="2"/></g></symbol>
<symbol id="warn" viewBox="0 0 24 24"><path d="M12 2L22.500 21.500h-21z" fill="#fff" stroke="#c0474c" stroke-width="1.600"/><path d="M12 8.500v7M12 17v2.200" stroke="#c0474c" stroke-width="2"/></symbol>
<symbol id="mag" viewBox="0 0 24 24"><circle cx="10" cy="10" r="7.500" fill="none" stroke="currentColor" stroke-width="1.800"/><path d="M15.500 15.500L22.500 22.500" stroke="currentColor" stroke-width="2.200"/></symbol>
<symbol id="flt" viewBox="0 0 14 14"><rect x=".6" y=".6" width="12.800" height="12.800" rx="2" fill="#eee" stroke="#555" stroke-width="1.100"/><path d="M3.500 6h5v5h-5zM6 6V3.500h4.500V8H8.500" fill="none" stroke="#444"/></symbol>
<symbol id="cls" viewBox="0 0 14 14"><rect x=".6" y=".6" width="12.800" height="12.800" rx="2" fill="#eee" stroke="#555" stroke-width="1.100"/><path d="M4 4l6 6M10 4l-6 6" stroke="#444" stroke-width="2.200"/></symbol>
<symbol id="selx" viewBox="0 0 24 24"><path d="M9 8h14v14H9z" fill="#fdea4e" stroke="#c9a822"/><text x="0" y="15" font-size="26" class="ser eps">ε</text></symbol>
<symbol id="sall" viewBox="0 0 24 24"><path d="M2 2h20v5.500H2zM2 9.500h20V15H2zM2 17h20v5.500H2z" fill="#fdea4e" stroke="#c9a822"/></symbol>
<symbol id="inv" viewBox="0 0 24 24"><path d="M2 2h20v20z" fill="#e8e8e8" stroke="#999"/><path d="M2 2l20 20H2z" fill="#fdea4e" stroke="#c9a822"/></symbol>
<symbol id="mtop" viewBox="0 0 24 24"><use href="#tab"/><path d="M2 17h20v6H2z" fill="#fdea4e" stroke="#c9a822"/><path d="M12 4l5 5h-3v7h-4V9H7z" fill="#3f6ea6"/></symbol>
<symbol id="coln" viewBox="0 0 24 24"><path d="M2 2h7v20H2zM9 2h8v20H9z" fill="#d8d8d8" stroke="#999"/><path d="M3 6h14M3 10h14M3 14h14M3 18h14" stroke="#999"/><rect x="13" y="13" width="10" height="10" rx="1.500" fill="#999"/><path d="M18 15v6M15 18h6" stroke="#fff" stroke-width="1.500"/></symbol>
<symbol id="tabe" viewBox="0 0 24 24"><use href="#tab"/><path d="M4 20L15 2l5 2.500L9 22l-6 2z" fill="#d97038" stroke="#7a3a18"/></symbol>
<symbol id="cond" viewBox="0 0 24 24"><path d="M2 1.500h20v5H2z" fill="#888"/><path d="M2 9h20v6H2z" fill="#8fd08f" stroke="#4a9a4a"/><path d="M2 17h20v6H2z" fill="#eee" stroke="#bbb"/><path d="M12 4h8" stroke="#fff" stroke-width="1.500"/><path d="M5 12h12" stroke="#fff" stroke-width="1.500"/><path d="M5 20h3" stroke="#c22" stroke-width="2.500"/></symbol>
<symbol id="dock" viewBox="0 0 24 24"><path d="M4 1.500h19v15H4z" fill="#fff" stroke="#888"/><path d="M4 1.500h19v4H4z" fill="#666"/><path d="M1 9h16v14H1z" fill="#f3f7fb" stroke="#6fa0cc" stroke-width="1.300"/><path d="M1 9h16v3.500H1z" fill="#8fbbe2"/><path d="M3 15h12M3 18h12M3 21h12" stroke="#86add2" stroke-width="1.400"/></symbol>
<symbol id="form" viewBox="0 0 24 24"><path d="M1 1.500h22v21H1z" fill="#e6f0fa" stroke="#7aa5d2" stroke-width="1.300"/><path d="M3.500 7h5M3.500 17h5" stroke="#444" stroke-width="2"/><path d="M11 4.500h9v5h-9zM11 14.500h9v5h-9z" fill="#fff" stroke="#5587bd" stroke-width="1.500"/></symbol>
<symbol id="gears" viewBox="0 0 24 24"><g fill="none"><circle cx="7.500" cy="7" r="3.800" stroke="#c8191f" stroke-width="3"/><circle cx="7.500" cy="7" r="6.300" stroke="#c8191f" stroke-width="2" stroke-dasharray="2.500 2.450"/><circle cx="18" cy="11" r="2.500" stroke="#777" stroke-width="2.500"/><circle cx="18" cy="11" r="4.500" stroke="#777" stroke-width="1.500" stroke-dasharray="1.700 1.800"/><circle cx="11" cy="18.500" r="2" stroke="#8fb0de" stroke-width="2"/><circle cx="11" cy="18.500" r="4" stroke="#8fb0de" stroke-width="1.500" stroke-dasharray="1.500 1.600"/></g><path d="M17 20h8l-4 4z" fill="#4d4d4d"/></symbol>
<symbol id="clk2" viewBox="0 0 24 24"><circle cx="12" cy="12" r="10.800" fill="#f4f6f6" stroke="#888" stroke-width="1.400"/><path d="M12 5v8h5" fill="none" stroke="#777" stroke-width="1.400"/></symbol>
<symbol id="doc" viewBox="0 0 24 24"><path d="M4 1h10l6 5v17H4z" fill="#fdfdfd" stroke="#888" stroke-width="1.400"/><path d="M7 8h10M7 11.500h10M7 15h10M7 18.500h7" stroke="#777" stroke-width="1.400"/></symbol>
<symbol id="edn" viewBox="0 0 24 24"><path d="M1 2h15v15H1z" fill="#fdea4e" stroke="#c9b022" stroke-width="1.200"/><path d="M12 18l7-11 4 2-7 12-4 2.500z" fill="#efc640" stroke="#8a7a3a"/></symbol>
<symbol id="lock" viewBox="0 0 24 24"><path d="M7 12V7a5 5 0 0 1 10 0v5" fill="none" stroke="#888" stroke-width="2.600"/><path d="M4 11h16v12H4z" fill="#666"/></symbol>
<symbol id="ext" viewBox="0 0 24 24"><path d="M2 3l5-2 8 11-5 5z" fill="#fff" stroke="#111" stroke-width="2.200"/><path d="M10 1l7 9M14 2l5 7M3 6l6 10" stroke="#111" stroke-width="2.200"/><circle cx="15" cy="17" r="5.500" fill="#fff" stroke="#111" stroke-width="2.400"/><circle cx="15" cy="18" r="2" fill="none" stroke="#111" stroke-width="1.600"/><path d="M17 6l5-5M1 14l4 4" stroke="#111" stroke-width="1.500" stroke-dasharray="2 1"/></symbol>
<symbol id="crs" viewBox="0 0 24 24"><circle cx="12" cy="12" r="9.500" fill="#ccc" stroke="#666" stroke-width="1.600"/><path d="M0 12h24M4 7h16M4 17h16M12 0v24M8 3q-3 9 0 18M16 3q3 9 0 18" fill="none" stroke="#666" stroke-width="1.600"/></symbol>
<symbol id="chat" viewBox="0 0 24 24"><path d="M12 2C5 2 1 6 1 11s4 9 11 9l4-.5 5 4-1-5.500c2-2 3-4 3-7 0-5-4-9-11-9z" fill="#5c5c5c"/><g fill="#fff"><circle cx="7" cy="11" r="1.600"/><circle cx="12" cy="11" r="1.600"/><circle cx="17" cy="11" r="1.600"/></g></symbol>
<symbol id="wx" viewBox="0 0 36 40"><circle cx="15" cy="24" r="14" fill="url(#go)"/><circle cx="24" cy="11" r="11" fill="#fa949c"/><text x="20.500" y="16" font-size="14" class="gl">1</text></symbol>
<symbol id="win" viewBox="0 0 30 30"><path d="M0 0h14.500v14.500H0zM15.500 0H30v14.500H15.500zM0 15.500h14.500V30H0zM15.500 15.500H30V30H15.500z" fill="url(#gw)"/></symbol>
<symbol id="beach" viewBox="0 0 64 32"><path d="M12 21q26-6 50-1-6 10-30 9Q14 28 12 21z" fill="#38bcd0"/><path d="M34 18q16-2 28 2l-14 6-20 1z" fill="#a5ecd8"/><path d="M0 17q14-6 28 2 8 3-4 5l8 4q-18 4-24-2-8-2-8-9z" fill="#e8b052"/><circle cx="33" cy="17" r="4.500" fill="#ffd27a"/><path d="M31 8q4-8 9-3 8-1 9 5-10 2-18-2z" fill="#e693bd"/><path d="M49 14q6-5 13 1-7 2-13-1z" fill="#ef9ab6"/><path d="M7 18l1-12M18 18V5M25 16l-2-8" stroke="#8a5a33" stroke-width="1.600"/><path d="M2 8q5-7 6-2 5-4 7 2-5-2-7-1-3-2-6 1zM13 5q3-7 6-2 5-5 7 2-5-2-7 0-4-2-6 0zM19 11q2-6 4-3 4-3 6 2-4-1-6 0-3-1-4 1z" fill="#38a070"/></symbol>
<symbol id="teams" viewBox="0 0 32 32"><circle cx="18" cy="6" r="4.500" fill="#7b83eb"/><circle cx="26.500" cy="8" r="3.200" fill="#5059c9"/><path d="M22 12h9v9q0 5-5 5h-4z" fill="#5059c9"/><path d="M10 12h15v11q0 8-7.500 8T10 23z" fill="#7b83eb"/><rect x="0" y="8" width="16" height="16" rx="1.500" fill="#4b53bc"/><path d="M4.500 12.500h7M8 12.500v8" stroke="#fff" stroke-width="2"/></symbol>
<symbol id="edge" viewBox="0 0 32 32"><circle cx="16" cy="16" r="15" fill="#1272cc"/><path d="M1 14C2 4 10 1 16 1c9 0 15 6 15 12 0 8-9 9-12 6 2-3-1-8-7-8-5 0-9 2-11 6z" fill="url(#ge)"/><path d="M11 13c-3 8 4 16 17 12-5 8-17 7-21 0-2-5 0-10 4-12z" fill="#0c4f9c"/><path d="M17 14q-3 4 1 7 6 4 13 0-3 0-9-2-4-2-5-5z" fill="#2a2a2a"/></symbol>
<symbol id="store" viewBox="0 0 32 32"><path d="M10 7V2.500q0-1.500 1.500-1.500h9Q22 1 22 2.500V7" fill="none" stroke="#2fb4f2" stroke-width="2.200"/><path d="M2 5h28v21q0 5-5 5H7q-5 0-5-5z" fill="#f3f3f3"/><path d="M10.500 12h5v5.500h-5z" fill="#f05022"/><path d="M16.700 12h5v5.500h-5z" fill="#7eba00"/><path d="M10.500 18.700h5v5.500h-5z" fill="#00a3ee"/><path d="M16.700 18.700h5v5.500h-5z" fill="#ffb800"/></symbol>
<symbol id="mail" viewBox="0 0 32 32"><path d="M1 12L16 1l15 11-15 10z" fill="#0c5db4"/><path d="M5 11h22v9H5z" fill="#f4f4f4"/><path d="M1 12l15 9 15-9v18H1z" fill="#29a9ea"/><path d="M1 30l30-18v18z" fill="#44c4f4"/></symbol>
<symbol id="ppt" viewBox="0 0 32 32"><path d="M18 5h12v22H18z" fill="#f6f2f0" stroke="#cf4422"/><path d="M20 12h8M20 16h8M20 20h8" stroke="#cf4422" stroke-width="1.600"/><path d="M1 4.500L19 1v30L1 27.500z" fill="#cf4422"/><path d="M7 22.500V9.500h4q4 0 4 4t-4 4H7" fill="none" stroke="#fff" stroke-width="2.300"/></symbol>
<symbol id="expl" viewBox="0 0 32 32"><path d="M1 4q0-2 2-2h8l3 4h15q2 0 2 2v10H1z" fill="#e5a513"/><path d="M1 9h30v20q0 1-1 1H2q-1 0-1-1z" fill="#fbcf4f"/><path d="M6 30v-6q0-2 2-2h16q2 0 2 2v6z" fill="#1577c7"/><path d="M11 26h10" stroke="#0b4f92" stroke-width="2"/></symbol>
<symbol id="yt" viewBox="0 0 32 32"><rect x="1" y="5" width="30" height="21" rx="4" fill="#f80000"/><path d="M13 11v9l7.500-4.500z" fill="#fff"/></symbol>
<symbol id="chr" viewBox="0 0 32 32"><circle cx="16" cy="16" r="15" fill="#fbc116"/><path d="M3 8.500a15 15 0 0 1 26 0H16L9 20z" fill="#e33b2e"/><path d="M3 8.500L9.500 20l6.500 3.500-4 7A15 15 0 0 1 3 8.500z" fill="#2da94f"/><circle cx="16" cy="16" r="7.200" fill="#fff"/><circle cx="16" cy="16" r="5.800" fill="#4285f4"/></symbol>
<symbol id="cmd" viewBox="0 0 32 32"><path d="M2 5h28v22H2z" fill="#050505" stroke="#b9bdc1" stroke-width="1.400"/><path d="M2 4.500h28v3H2z" fill="#c4c8cc"/><path d="M5 11h3M9 11h2M12 10l3 4h4" stroke="#ddd" fill="none"/></symbol>
<symbol id="snip" viewBox="0 0 32 32"><rect x="2" y="2" width="22" height="24" rx="3" fill="#f1f1f1"/><path d="M6 6h12v12H6z" fill="none" stroke="#d8412f" stroke-width="2.600" stroke-dasharray="3 2"/><path d="M14 21h13M22 9v13q-2 3-4 5" fill="none" stroke="#8b8f94" stroke-width="2.500"/><circle cx="18" cy="28" r="3" fill="none" stroke="#2e8de0" stroke-width="2.200"/><circle cx="28.500" cy="19" r="2.800" fill="none" stroke="#2e8de0" stroke-width="2.200"/></symbol>
<symbol id="phot" viewBox="0 0 32 32"><rect x="3" y="3" width="26" height="26" rx="3" fill="#2278d2"/><path d="M16 3h10q3 0 3 3v12z" fill="#5a5ad0"/><circle cx="23" cy="8.500" r="2.500" fill="#fff"/><path d="M3 27l11-12q2-2 4 0l11 12q-1 2-3 2H6q-3 0-3-2z" fill="#4fd3f2"/></symbol>
<symbol id="note" viewBox="0 0 32 32"><path d="M5 4h22v26H5z" fill="#4fc5e4"/><path d="M5 27h22v3H5z" fill="#c5661e"/><path d="M8 1v5M12 1v5M16 1v5M20 1v5M24 1v5" stroke="#1a7ca0" stroke-width="2"/><path d="M9 11h14M9 16h14M9 21h14" stroke="#13627f" stroke-width="2.200"/></symbol>
<symbol id="gh" viewBox="0 0 32 32"><circle cx="16" cy="16" r="14.500" fill="#7c3aa8"/><circle cx="16" cy="16" r="10.500" fill="#fff"/><path d="M10 9l3.500 1.500q3-.6 5.500 0L22 9q1 2 .5 4 4 7-4 8.500V27h-5v-3q-3 0-4-3 2 1 4 1v-.500Q6 20 9.500 13 9 11 10 9z" fill="#7c3aa8"/></symbol>
<symbol id="term" viewBox="0 0 32 32"><path d="M1 5h30v22H1z" fill="#454545"/><path d="M1 5h30v4H1z" fill="#cfcfcf"/><path d="M20 5h11v4H20z" fill="#8a8a8a"/><path d="M5 13l5 5-5 5M13 22h9" fill="none" stroke="#fff" stroke-width="2.400"/></symbol>
<symbol id="wifi" viewBox="0 0 24 24"><path d="M2 10q10-9 20 0" fill="none" stroke="#777" stroke-width="2"/><path d="M5 13.500q7-6 14 0M8 17q4-3.500 8 0" fill="none" stroke="#fff" stroke-width="2"/><circle cx="12" cy="20" r="2" fill="#fff"/></symbol>
<symbol id="mute" viewBox="0 0 24 24"><path d="M2 9h4l6-5v17l-6-5H2zM16 9l6 6M22 9l-6 6" fill="none" stroke="#fff" stroke-width="1.800"/></symbol>
<symbol id="bat" viewBox="0 0 24 24"><rect x="3.500" y="6.500" width="17" height="13" rx="2.500" fill="none" stroke="#fff" stroke-width="1.800"/><path d="M6 9h12v8H6z" fill="#fff"/><path d="M22.500 10v6" stroke="#fff" stroke-width="2"/><path d="M5 1L1 9h3l-1 6 7-9H7z" fill="#fff" stroke="#2a2a2a"/></symbol>
<symbol id="bell" viewBox="0 0 24 24"><path d="M3 19q3-2 3-8c0-6 10-6 11-1l1 6 3 3z" fill="#fff"/><path d="M9 20.500h6q-3 4-6 0z" fill="#fff"/><path d="M17 2h4l-4 5h4" fill="none" stroke="#fff" stroke-width="1.600"/><path d="M9 9.500h4l-4 5h4" fill="none" stroke="#2a2a2a" stroke-width="1.600"/></symbol>
<symbol id="cop" viewBox="0 0 36 36"><path d="M10 3h11q3 0 4 4l-7 0-6 18q-1 3-4 3-7 0-6-8L6 7q1-4 4-4z" fill="url(#gc)"/><path d="M19 7h3q4 0 5 5 5 1 5 6l-3 10q-1 4-6 4H12l6-9z" fill="url(#gp)"/><rect x="12" y="24" width="24" height="11" rx="2" fill="#ffc81f"/><text x="14" y="33" font-size="9.500" class="gl b">PRE</text></symbol>
</svg>

<header class="title"><svg class="i20"><use href="#qgis"/></svg><span>*İsimsiz Proje — QGIS</span>
<div class="caps"><svg viewBox="0 0 14 14"><path d="M1 6.500h12" stroke="#111"/></svg><svg viewBox="0 0 14 14"><rect x="1.500" y="3.500" width="9" height="9" rx="1.500" fill="none" stroke="#111" stroke-width="1.200"/><path d="M4 1.500h6.500q2 0 2 2V10" fill="none" stroke="#111" stroke-width="1.200"/></svg><svg viewBox="0 0 14 14"><path d="M1.500 1.500l11 11M12.500 1.500l-11 11" stroke="#111" stroke-width="1.200"/></svg></div></header>
<nav class="menu"><span>Pro<u>j</u>e</span><span><u>D</u>üzenle</span><span><u>P</u>encere</span><span><u>K</u>atman</span><span><u>A</u>yarlar</span><span><u>E</u>klentiler</span><span>Vekt<u>ö</u>r</span><span><u>R</u>aster</span><span><u>V</u>eritabanı</span><span><u>W</u>eb</span><span><u>A</u>ğ örgüsü</span><span>İş<u>l</u>eme</span><span><u>Y</u>ardım</span></nav>

<div class="bar bar1">
<svg class="grip"><use href="#grip"/></svg><svg><use href="#new"/></svg><svg><use href="#open"/></svg><svg><use href="#save"/></svg><svg><use href="#layout"/></svg><svg><use href="#mgr"/></svg><svg><use href="#style"/></svg><svg class="grip"><use href="#grip"/></svg><b class="on"><svg><use href="#hand"/></svg></b><svg><use href="#pansel"/></svg><svg><use href="#zin"/></svg><svg><use href="#zout"/></svg><svg><use href="#zfull"/></svg><svg><use href="#zsel"/></svg><svg><use href="#zlay"/></svg><svg class="off"><use href="#z11"/></svg><svg><use href="#zlast"/></svg><svg class="off"><use href="#znext"/></svg><svg><use href="#nmap"/></svg><svg><use href="#n3d"/></svg><svg><use href="#nbm"/></svg><svg><use href="#sbm"/></svg><svg><use href="#clock"/></svg><svg><use href="#sync"/></svg><svg class="grip"><use href="#grip"/></svg><svg><use href="#sel"/></svg><svg class="dd"><use href="#td"/></svg><svg><use href="#self"/></svg><svg class="dd"><use href="#td"/></svg><svg><use href="#desel"/></svg><svg class="dd"><use href="#td"/></svg><svg><use href="#loc"/></svg><svg class="dd"><use href="#td"/></svg><svg class="grip"><use href="#grip"/></svg><svg><use href="#ident"/></svg><svg><use href="#abac"/></svg><b class="on"><svg><use href="#gear"/></svg></b><svg><use href="#sigma"/></svg><svg><use href="#tab"/></svg><svg class="dd"><use href="#td"/></svg><svg><use href="#meas"/></svg><svg class="dd"><use href="#td"/></svg><svg><use href="#tips"/></svg><svg class="off"><use href="#act"/></svg><svg class="dd off2"><use href="#td"/></svg>
</div>
<div class="bar bar2">
<svg class="grip"><use href="#grip"/></svg><svg><use href="#dsm"/></svg><svg><use href="#gpkg"/></svg><svg><use href="#shp"/></svg><svg><use href="#fea"/></svg><svg><use href="#mem"/></svg><svg><use href="#mesh"/></svg><svg><use href="#vtx"/></svg><svg class="grip"><use href="#grip"/></svg><svg class="off"><use href="#pens"/></svg><svg><use href="#pen"/></svg><svg class="off"><use href="#savee"/></svg><svg class="off"><use href="#dig"/></svg><svg class="dd off2"><use href="#td"/></svg><svg class="off"><use href="#poly"/></svg><svg class="off"><use href="#vert"/></svg><svg class="dd off2"><use href="#td"/></svg><svg class="off"><use href="#mult"/></svg><svg class="off"><use href="#trash"/></svg><svg class="off"><use href="#cut"/></svg><svg class="off"><use href="#copy"/></svg><svg class="off"><use href="#paste"/></svg><svg class="off"><use href="#undo"/></svg><svg class="off"><use href="#redo"/></svg><svg class="grip"><use href="#grip"/></svg><svg><use href="#lab"/></svg><svg><use href="#dia"/></svg><i class="sep"></i><svg><use href="#labp"/></svg><svg><use href="#labr"/></svg><i class="sep"></i><svg class="off"><use href="#g1"/></svg><svg class="off"><use href="#g2"/></svg><svg class="off"><use href="#g3"/></svg><svg class="off"><use href="#g4"/></svg><svg class="off"><use href="#g5"/></svg><svg class="grip"><use href="#grip"/></svg><svg><use href="#db"/></svg><svg class="grip"><use href="#grip"/></svg><svg><use href="#msrch"/></svg><svg class="grip"><use href="#grip"/></svg><svg><use href="#pyc"/></svg><svg class="grip"><use href="#grip"/></svg><svg><use href="#help"/></svg><svg class="grip"><use href="#grip"/></svg>
</div>

<main>
<section class="left">
<div class="dockh"><span>Tarayıcı</span><svg><use href="#flt"/></svg><svg><use href="#cls"/></svg></div>
<div class="mini browse"><svg><use href="#addl"/></svg><svg><use href="#sync"/></svg><svg><use href="#filt"/></svg><svg><use href="#coll"/></svg><svg><use href="#info"/></svg></div>
<div class="treebox">
<ul class="tree">
<li><svg class="tw"><use href="#td"/></svg><svg class="i20"><use href="#drv"/></svg>D:\ (DRIVERS)</li>
<li class="l1"><svg class="tw"><use href="#tr"/></svg><svg class="i20"><use href="#fold"/></svg>DENEME</li>
<li class="l1"><svg class="tw"><use href="#tr"/></svg><svg class="i20"><use href="#fold"/></svg>OSM</li>
<li><svg class="tw"><use href="#tr"/></svg><svg class="i20"><use href="#gpkgb"/></svg>GeoPackage</li>
<li><i class="tw"></i><svg class="i20"><use href="#fea0"/></svg>SpatiaLite</li>
<li><svg class="tw"><use href="#td"/></svg><svg class="i20"><use href="#pg"/></svg>PostgreSQL</li>
<li class="l1"><svg class="tw"><use href="#td"/></svg><svg class="i20"><use href="#conn"/></svg>local</li>
<li class="l2"><svg class="tw"><use href="#tr"/></svg><svg class="i20"><use href="#sch"/></svg>public</li>
<li><i class="tw"></i><svg class="i20"><use href="#hana"/></svg>SAP HANA</li>
<li><i class="tw"></i><svg class="i20"><use href="#ms"/></svg>MS SQL Sunucusu</li>
<li><i class="tw"></i><svg class="i20"><use href="#ora"/></svg>Oracle</li>
<li><svg class="tw"><use href="#td"/></svg><svg class="i20"><use href="#globe"/></svg>WMS/WMTS</li>
<li class="l1 hov"><svg class="tw"><use href="#td"/></svg><svg class="i20"><use href="#conn"/></svg>harita</li>
<li class="l2"><svg class="tw"><use href="#tr"/></svg><svg class="i20"><use href="#globe"/></svg>Natural Earth</li>
<li><i class="tw"></i><svg class="i20"><use href="#scene"/></svg>Scenes</li>
<li><i class="tw"></i><svg class="i20"><use href="#sens"/></svg>SensorThings</li>
<li><i class="tw"></i><svg class="i20"><use href="#vt"/></svg>Vector Tiles</li>
<li><svg class="tw"><use href="#td"/></svg><svg class="i20"><use href="#xyz"/></svg>XYZ Tiles</li>
<li class="l1"><i class="tw"></i><svg class="i20"><use href="#xyz"/></svg>Mapzen Global Terrain</li>
<li class="l1"><i class="tw"></i><svg class="i20"><use href="#xyz"/></svg>OpenStreetMap</li>
<li class="l1"><i class="tw"></i><svg class="i20"><use href="#xyz"/></svg>SATELLİTE</li>
<li><i class="tw"></i><svg class="i20"><use href="#wcs"/></svg>WCS</li>
</ul>
<div class="vs tvs"><b><svg><use href="#tu"/></svg></b><i class="trough a"></i><i class="slide"></i><i class="trough z"></i><b><svg><use href="#td"/></svg></b></div>
</div>
<div class="dots"></div>
<div class="dockh"><span>Katmanlar</span><svg><use href="#flt"/></svg><svg><use href="#cls"/></svg></div>
<div class="mini layers"><svg><use href="#brush"/></svg><svg><use href="#grp"/></svg><svg><use href="#eye"/></svg><svg><use href="#filtd"/></svg><svg><use href="#eps"/></svg><svg class="dd"><use href="#td"/></svg><svg><use href="#expd"/></svg><svg><use href="#coll"/></svg><svg><use href="#rem"/></svg></div>
<ul class="laylist">
<li><svg class="tw"><use href="#tr"/></svg><i class="cb"></i><svg class="i20"><use href="#ras"/></svg><em>il_siniri_guncel</em></li>
<li class="sel"><svg class="tw"><use href="#tr"/></svg><i class="cb">✓</i><svg class="i20"><use href="#pol"/></svg><u>il_siniri_guncel</u></li>
<li><i class="tw"></i><i class="cb"></i><svg class="i20"><use href="#line"/></svg><em>gis_osm_railways_free_1</em></li>
<li><i class="tw"></i><svg class="i20 v"><use href="#vec"/></svg><strong>il_sinirlari</strong><svg class="warn"><use href="#warn"/></svg></li>
<li><i class="tw"></i><svg class="i20 v"><use href="#vec"/></svg><strong>il_sinirlari</strong><svg class="warn"><use href="#warn"/></svg></li>
</ul>
</section>

<section class="center">
<div class="canvas">
<svg viewBox="377 152 1162 378" width="1162" height="378">
<defs><filter id="rough" x="-2%" y="-2%" width="104%" height="104%" color-interpolation-filters="sRGB"><feTurbulence type="fractalNoise" baseFrequency=".07" numOctaves="2" seed="7"/><feDisplacementMap in="SourceGraphic" scale="6" xChannelSelector="R" yChannelSelector="G"/></filter></defs>
<g filter="url(#rough)"><g class="prov" transform="translate(560 190) scale(.33333)">
<polygon fill="#fee187" points="277,112 310,88 362,84 355,140 352,172 358,190 332,210 327,240 335,262 300,274 240,275 237,260 265,240 275,218 272,185 300,178 312,150 300,130 282,125"/>
<polygon fill="#fdb04f" points="352,172 405,180 420,188 450,158 521,142 505,165 502,220 470,218 435,225 415,245 385,265 360,275 335,262 327,240 332,210 358,190"/>
<polygon fill="#d71f21" points="362,84 375,72 405,72 420,85 470,90 510,88 515,120 521,142 490,152 450,158 420,188 405,180 352,172 360,130"/>
<polygon fill="#fee187" points="521,142 560,165 610,180 655,188 650,220 625,222 590,215 560,220 530,212 502,212 508,170"/>
<polygon fill="#fee187" points="655,188 700,190 760,200 815,195 805,215 770,205 740,225 700,235 690,245 665,235 645,215"/>
<polygon fill="#fee187" points="690,245 700,235 740,225 770,205 815,205 810,250 790,285 765,280 715,270 735,262 770,256 740,250 720,252"/>
<polygon fill="#fdac4f" points="815,205 825,193 860,202 915,212 895,230 903,265 885,285 880,308 830,305 795,285 805,262"/>
<polygon fill="#fec65e" points="915,212 965,205 1010,218 1000,235 970,250 955,270 905,265 893,240"/>
<polygon fill="#fdb953" points="1155,105 1190,95 1235,80 1300,84 1365,90 1370,120 1360,130 1390,150 1388,180 1365,190 1360,235 1335,245 1300,238 1300,215 1210,212 1198,215 1180,188 1205,178 1208,158 1180,142 1165,140 1180,122"/>
<polygon fill="#fec25b" points="1093,180 1120,175 1145,150 1185,142 1208,158 1205,178 1180,188 1198,215 1170,220 1130,245 1100,225 1070,215 1075,190"/>
<polygon fill="#fd8d3c" points="1075,142 1120,112 1155,105 1180,122 1160,145 1140,152 1120,178 1093,180"/>
<polygon fill="#e62f22" points="960,207 975,175 1040,152 1075,142 1093,180 1075,190 1070,218 1010,218"/>
<polygon fill="#fef3a0" points="890,340 960,320 1080,285 1110,262 1150,258 1190,285 1250,310 1275,315 1240,350 1230,400 1250,440 1280,470 1310,490 1290,540 1250,530 1240,490 1210,470 1160,465 1130,490 1070,495 1050,470 1045,420 1020,370 960,345 900,350"/>
<polygon fill="#f7602d" points="860,292 905,268 955,270 975,248 1000,235 1050,220 1095,220 1130,245 1110,270 1080,280 1040,300 980,310 930,310 920,325 885,335 860,330"/>
<polygon fill="#fda94b" points="1365,90 1410,90 1450,85 1462,70 1490,78 1478,88 1485,100 1515,120 1510,140 1525,165 1515,185 1455,180 1425,187 1390,178 1392,155 1405,130 1375,120 1365,105"/>
<polygon fill="#fee085" points="1130,250 1180,228 1210,212 1300,215 1300,238 1340,245 1335,285 1350,310 1315,320 1250,310 1190,275 1160,262"/>
<polygon fill="#fecb63" points="1340,245 1360,235 1365,190 1388,180 1425,187 1455,180 1465,205 1475,220 1470,250 1520,265 1535,290 1510,320 1485,330 1485,355 1410,358 1350,358 1325,328 1335,300 1345,280"/>
<polygon fill="#fee68c" points="780,395 800,380 850,345 890,338 900,350 960,350 1020,352 1035,390 1045,420 1055,450 1045,470 1010,480 960,465 930,460 900,475 850,482 830,440 828,405"/>
<polygon fill="#fdb853" points="765,290 830,305 865,310 860,335 830,360 785,385 775,400 742,392 740,350"/>
<polygon fill="#fee07c" points="435,320 520,308 530,350 570,380 630,410 625,450 595,458 590,475 545,485 500,455 430,445 365,445 335,460 350,430 330,425 435,395"/>
<polygon fill="#fedb74" points="520,308 600,305 640,300 660,285 700,282 750,275 768,290 745,320 740,375 710,375 670,410 630,410 570,380 530,350"/>
<polygon fill="#f97b36" points="615,285 650,270 710,262 712,275 650,285 625,292"/>
<polygon fill="#f97635" points="322,300 405,295 435,320 432,360 438,385 420,395 320,415 240,430 250,370 270,350 300,330"/>
<polygon fill="#f97635" points="260,330 290,300 330,280 345,258 368,262 355,280 310,305 270,345"/>
<polygon fill="#f97635" points="188,335 210,325 230,330 225,342 200,345"/>
<polygon fill="#fed26b" points="435,445 500,455 545,485 590,475 630,490 640,515 690,515 650,535 615,550 615,595 600,615 570,610 530,580 460,580 400,560 385,520 435,500"/>
<polygon fill="#fec25b" points="595,458 640,430 670,410 705,378 742,378 745,395 775,400 822,405 830,440 838,470 810,500 760,512 690,515 640,512 630,490 595,475"/>
<polygon fill="#fed26b" points="340,465 425,445 438,480 430,500 350,505 345,480"/>
<polygon fill="#fed26b" points="385,515 400,560 460,582 530,580 575,610 570,618 500,625 435,630 415,650 380,625 330,605 262,592 290,585 275,550 290,540 315,570 320,585 390,572 355,555 330,535"/>
<polygon fill="#fec25b" points="600,615 615,598 670,602 725,590 740,570 790,585 790,605 740,630 735,650 765,665 720,690 690,780 660,785 655,765 620,745 590,700 615,665"/>
<polygon fill="#fed26b" points="810,500 838,470 850,482 900,475 930,460 960,465 1010,482 995,500 1015,515 985,555 955,570 925,562 880,595 820,635 800,658 735,650 740,630 790,605 790,585 740,570 765,545 775,520"/>
<polygon fill="#c91024" points="615,550 650,535 690,515 735,502 775,520 765,545 735,565 725,590 670,600 615,598"/>
<polygon fill="#feb450" points="370,678 405,668 400,650 415,650 435,632 500,625 570,618 610,620 615,665 590,700 550,700 500,705 400,715"/>
<polygon fill="#fee07c" points="400,715 430,705 500,705 590,700 620,745 655,765 665,785 740,775 750,790 735,830 685,855 650,840 630,805 570,790 545,765 480,770 440,762 440,735"/>
<polygon fill="#fee07c" points="418,810 470,798 500,800 530,790 545,800 520,820 500,825 510,808 470,810 430,815"/>
<polygon fill="#fffba8" points="690,780 705,740 725,685 765,662 830,660 880,680 905,720 890,738 820,730 780,740 745,775 715,785"/>
<polygon fill="#fedb74" points="800,655 830,625 880,595 925,562 955,570 980,600 985,630 965,680 965,715 905,722 880,680 835,662"/>
<polygon fill="#fee68c" points="955,570 1000,545 1015,505 995,490 1050,475 1075,495 1130,490 1160,462 1210,460 1240,490 1248,540 1222,580 1230,625 1260,635 1320,620 1355,660 1380,690 1385,738 1330,705 1270,685 1220,695 1165,725 1160,790 1110,800 1065,770 1025,720 965,712 965,680 985,630"/>
<polygon fill="#fed670" points="1248,540 1300,530 1300,490 1330,490 1365,520 1370,550 1390,580 1385,600 1335,620 1260,635 1230,625 1222,590"/>
<polygon fill="#fed670" points="1250,438 1290,430 1330,395 1360,390 1400,415 1405,450 1420,465 1395,480 1390,505 1365,520 1330,490 1290,480"/>
<polygon fill="#f04726" points="1275,315 1315,320 1350,355 1340,380 1330,400 1290,430 1250,438 1228,400 1235,370 1262,350"/>
<polygon fill="#fb7232" points="1365,520 1400,495 1395,480 1415,440 1465,460 1475,530 1465,560 1455,583 1385,585 1370,550"/>
<polygon fill="#fec25b" points="1190,790 1300,765 1385,738 1435,715 1455,735 1480,770 1475,800 1410,797 1380,830 1340,850 1280,880 1200,890 1160,900 1130,890 1140,840 1195,845 1218,828 1195,815"/>
<polygon fill="#e62f22" points="1390,590 1455,583 1485,610 1505,640 1490,665 1450,680 1430,705 1390,718 1378,680 1330,635"/>
<polygon fill="#fff4a0" points="1110,800 1160,790 1165,725 1220,695 1270,685 1330,705 1385,738 1300,765 1190,790 1195,815 1218,828 1195,845 1140,838 1112,820"/>
<polygon fill="#febd56" points="685,860 740,830 750,790 745,775 780,740 820,728 890,738 910,722 965,712 1025,720 1065,770 1110,810 1140,838 1130,890 1100,870 1060,830 1000,815 950,792 870,788 855,830 845,870 800,865 740,885 700,875"/>
<polygon fill="#fee187" points="440,270 460,266 465,274 445,276"/><polygon fill="#fee187" points="465,290 500,290 505,298 485,303"/>
<path class="isl" d="M432,284l12,4 10,5M643,234l18,6M573,282l8,3M305,445l25,2-10,10M395,765l35,-12 5,14-20,8zM430,765l60,3M620,815l12,-5 8,8M228,380l12,0M350,512l15,5M325,565l15,15"/>
<g transform="translate(1410 0)">
<polygon fill="#fed976" points="105,125 190,120 210,150 240,180 310,178 340,205 290,235 200,240 130,238 60,205 45,180 105,185 115,165"/>
<polygon fill="#e12922" points="-70,365 0,358 80,345 95,325 120,320 165,340 200,372 215,400 200,430 175,435 165,460 115,470 105,498 60,490 50,455 0,440 -20,405 -60,380"/>
<polygon fill="#f34826" points="200,372 270,360 275,345 340,330 408,325 410,310 460,300 490,290 490,325 570,350 520,370 515,430 510,475 400,490 370,560 300,550 320,490 260,480 180,470 175,435 205,430 215,400"/>
<polygon fill="#dd2822" points="60,215 130,235 215,240 225,222 245,230 250,260 225,290 180,290 120,318 105,310 125,290 58,250"/>
<polygon fill="#fed976" points="290,235 340,205 370,200 410,215 470,232 470,290 455,305 415,305 410,285 355,270"/>
<polygon fill="#c20d24" points="250,240 290,235 330,258 355,280 413,290 408,325 340,330 275,345 270,360 200,370 165,340 120,320 180,290 225,290 250,260"/>
<polygon fill="#fb7533" points="470,235 560,230 625,212 620,250 580,270 610,305 590,345 490,325 490,290 470,290"/>
<polygon fill="#fb7c37" points="580,270 610,250 700,270 745,270 755,290 715,300 700,340 710,360 685,378 590,345 610,305"/>
<polygon fill="#fede7c" points="625,212 665,208 720,225 790,225 805,250 800,285 750,280 745,270 700,270 630,250"/>
<polygon fill="#fffba8" points="790,222 850,205 915,180 932,205 905,245 850,260 820,285 803,280 805,250"/>
<polygon fill="#fd8a3b" points="820,285 850,262 905,250 925,275 990,262 1000,232 1065,228 1090,240 1090,300 1040,305 1060,335 1090,365 1060,380 1080,410 1050,430 1040,460 980,475 960,455 900,435 830,435 780,360 820,352 838,330"/>
<polygon fill="#fdac4b" points="700,340 720,295 815,287 838,330 820,352 740,350 710,360"/>
<polygon fill="#fec65e" points="915,180 955,150 1010,155 1085,158 1095,180 1065,228 1000,230 990,262 925,275 920,250 905,245 932,205"/>
<polygon fill="#fda94b" points="1085,158 1100,138 1130,142 1140,165 1215,200 1210,212 1150,235 1115,265 1090,268 1090,240 1068,225"/>
<polygon fill="#fee68c" points="1115,265 1150,235 1200,208 1240,225 1255,255 1230,290 1248,330 1200,345 1195,355 1090,365 1060,340 1035,310 1090,300 1090,268"/>
<polygon fill="#fd9740" points="515,395 530,360 580,350 685,378 740,350 815,370 835,410 800,425 760,415 710,412 640,430 575,450 590,470 570,490 515,475"/>
<polygon fill="#fd9740" points="520,545 550,500 560,510 650,520 700,520 735,480 780,490 785,520 770,555 700,570 650,590 560,570"/>
<polygon fill="#f5542a" points="575,450 640,430 710,412 800,412 780,430 735,460 735,480 690,520 650,515 570,505 590,470"/>
<polygon fill="#fd8a3b" points="735,470 780,430 830,435 900,435 915,480 895,540 810,550 770,545 785,520 775,475"/>
<polygon fill="#ffef98" points="60,490 105,498 120,470 175,458 205,480 300,485 325,495 300,550 290,570 240,590 170,610 130,670 80,655 95,640 75,590 45,580 65,550 55,510"/>
<polygon fill="#feae4f" points="35,680 80,665 130,668 140,635 190,600 240,580 235,620 225,670 190,690 200,760 130,825 100,825 50,800 70,770 45,735 22,725"/>
<polygon fill="#fda94b" points="240,590 290,560 365,552 415,600 420,640 400,660 390,690 410,695 400,720 320,740 280,715 230,700 225,640"/>
<polygon fill="#c50e24" points="400,490 510,480 555,475 550,520 520,545 560,570 620,590 635,600 590,625 540,610 490,630 420,640 415,600 370,560"/>
<polygon fill="#f5512a" points="600,650 625,632 700,645 720,690 770,785 640,813 570,810 530,790 470,790 445,730 450,710 550,690"/>
<polygon fill="#c00225" points="395,690 400,660 420,642 490,630 540,610 590,625 640,600 625,635 600,650 550,690 490,710 440,700"/>
<polygon fill="#f86a30" points="190,700 215,672 230,715 265,712 285,738 255,780 205,770 205,745 178,735"/>
<polygon fill="#f03b26" points="255,780 285,738 320,740 400,715 410,700 450,705 445,730 470,790 405,805 330,770 290,795"/>
<polygon fill="#fdb04f" points="285,795 330,770 345,785 395,795 400,815 350,812"/>
<polygon fill="#e62f22" points="190,775 240,775 275,785 270,830 285,870 245,880 240,905 210,930 185,910 190,895 165,865 215,825 215,795"/>
<polygon fill="#bd0026" points="635,590 650,590 720,580 760,550 850,545 900,535 920,565 900,600 890,640 885,675 830,685 770,698 730,698 720,640 630,632 620,610"/>
<polygon fill="#cb1124" points="725,700 830,685 885,672 890,695 970,680 995,690 995,710 955,720 970,750 870,755 770,785"/>
<polygon fill="#feda75" points="900,445 960,455 1010,470 1040,455 1070,425 1105,460 1115,500 1045,510 1010,548 950,560 900,550 915,490"/>
<polygon fill="#fed976" points="950,560 1020,540 1040,510 1110,500 1185,512 1130,545 1110,590 1110,630 1070,620 1020,600 970,600"/>
<polygon fill="#eb3623" points="905,590 925,565 965,562 965,610 930,640 970,655 975,680 940,698 890,690 885,650 905,630"/>
<polygon fill="#f5542a" points="930,635 975,602 1030,600 1080,618 1110,630 1135,665 1065,675 1010,685 975,680 970,655"/>
<polygon fill="#feb14f" points="960,710 990,710 1000,682 1065,685 1130,665 1220,668 1200,725 1110,720 1080,745 1010,755 970,745"/>
<polygon fill="#f03e25" points="1200,700 1215,670 1300,660 1375,665 1370,700 1400,740 1370,745 1330,772 1315,740 1285,725 1240,738 1200,725"/>
<polygon fill="#fff4a0" points="1055,382 1090,365 1195,357 1210,380 1300,400 1350,405 1345,440 1300,440 1250,465 1175,450 1155,490 1115,500 1105,460 1070,425 1080,410"/>
<polygon fill="#d91e20" points="1155,490 1175,450 1210,455 1250,465 1300,450 1320,490 1335,570 1358,585 1325,650 1350,662 1220,668 1130,665 1115,600 1105,580 1130,545 1170,525 1185,510"/>
<polygon fill="#cf1422" points="1200,342 1245,345 1330,355 1370,375 1400,405 1365,392 1350,405 1290,398 1210,380"/>
</g></g></g>
<g class="maplab" transform="translate(560 190) scale(.33333)">
<text x="428" y="114">KIRKLARELİ</text><text x="165" y="173">EDİRNE</text><text x="392" y="196">TEKİRDAĞ</text><text x="667" y="227">KOCAELİ</text><text x="978" y="125">BARTIN</text><text x="1288" y="140">KASTAMONU</text><text x="106" y="347">ÇANAKKALE</text><text x="571" y="362">BURSA</text><text x="262" y="423">BALIKESİR</text><text x="507" y="449">KÜTAHYA</text><text x="937" y="329">BOLU</text><text x="1070" y="318">ÇANKIRI</text><text x="899" y="399">ESKİŞEHIR</text><text x="1335" y="300">ÇORUM</text><text x="1337" y="458">YOZGAT</text><text x="433" y="546">MANİSA</text><text x="693" y="541">UŞAK</text><text x="869" y="541">AFYONKARAHİSAR</text><text x="297" y="619">İZMİR</text><text x="911" y="629">ISPARTA</text><text x="1101" y="616">AKSARAY</text><text x="363" y="719">AYDIN</text><text x="659" y="722">DENİZLİ</text><text x="1275" y="689">NİĞDE</text><text x="402" y="790">MUĞLA</text><text x="801" y="815">ANTALYA</text><text x="1112" y="776">KARAMAN</text><text x="1285" y="864">MERSİN</text>
<g transform="translate(1410 0)"><text x="192" y="177">SAMSUN</text><text x="400" y="234">ORDU</text><text x="545" y="264">GİRESUN</text><text x="812" y="215">RİZE</text><text x="1127" y="190">ARDAHAN</text><text x="250" y="360">TOKAT</text><text x="1163" y="281">KARS</text><text x="1289" y="358">IĞDIR</text><text x="927" y="336">ERZURUM</text><text x="244" y="437">SİVAS</text><text x="412" y="449">ERZİNCAN</text><text x="1187" y="460">AĞRI</text><text x="943" y="483">MUŞ</text><text x="652" y="508">BİNGÖL</text><text x="171" y="535">KAYSERİ</text><text x="1233" y="554">VAN</text><text x="1071" y="578">BİTLİS</text><text x="662" y="594">ELAZIĞ</text><text x="109" y="633">KAHRAMANMARAŞ</text><text x="652" y="670">DİYARBAKIR</text><text x="55" y="734">ADANA</text><text x="1301" y="725">HAKKARİ</text><text x="1004" y="760">ŞIRNAK</text><text x="766" y="774">MARDİN</text><text x="492" y="789">ŞANLIURFA</text><text x="240" y="850">KİLİS</text><text x="77" y="892">HATAY</text></g>
</g>
</svg>
</div>
<div class="dots mid"></div>
<div class="dockh tabh"><span>il_siniri_guncel — Features Total: 82, Filtered: 82, Selected: 0</span><svg><use href="#flt"/></svg><svg><use href="#cls"/></svg></div>
<div class="mini attr"><svg><use href="#pen"/></svg><svg class="off"><use href="#mult"/></svg><svg class="off"><use href="#savee"/></svg><svg><use href="#sync"/></svg><i class="sep"></i><svg class="off"><use href="#coln"/></svg><svg class="off"><use href="#trash"/></svg><svg class="off"><use href="#cut"/></svg><svg class="off"><use href="#copy"/></svg><svg class="off"><use href="#paste"/></svg><i class="sep"></i><svg><use href="#selx"/></svg><svg><use href="#sall"/></svg><svg><use href="#inv"/></svg><svg><use href="#desel1"/></svg><svg><use href="#filt"/></svg><svg><use href="#mtop"/></svg><svg><use href="#pansel"/></svg><svg><use href="#zsel"/></svg><i class="sep"></i><svg class="off"><use href="#coln"/></svg><svg class="off"><use href="#coln"/></svg><svg><use href="#tabe"/></svg><svg><use href="#abac"/></svg><i class="sep"></i><svg><use href="#cond"/></svg><i class="sep"></i><svg><use href="#act"/></svg><b class="on"><svg><use href="#dock"/></svg></b></div>
<div class="grid">
<div class="rows">
<div class="r h"><i></i><span>id_0</span><span class="sorted">id<svg class="srt"><use href="#tu"/></svg></span><span>adm1_tr</span><span>adm1_en</span><span>adm1</span><span>shape_leng</span><span>shape_area</span><span>adm0_en</span><span>adm0_tr</span></div>
<div class="r"><i>1</i><b>4</b><b>1</b><span>ADANA</span><span>ADANA</span><span>TUR001</span><b>8,27178643039</b><b>1,40708347359</b><span>TURKEY</span><span>TÜRKİYE</span></div>
<div class="r"><i>2</i><b>24</b><b>2</b><span>ADIYAMAN</span><span>ADIYAMAN</span><span>TUR002</span><b>5,49442178803</b><b>0,750560939348</b><span>TURKEY</span><span>TÜRKİYE</span></div>
<div class="r"><i>3</i><b>25</b><b>3</b><span>AFYONKARAHİ...</span><span>AFYONKARAHI...</span><span>TUR003</span><b>7,1499961062</b><b>1,45006387551</b><span>TURKEY</span><span>TÜRKİYE</span></div>
<div class="r"><i>4</i><b>27</b><b>4</b><span>AĞRI</span><span>AGRI</span><span>TUR004</span><b>6,58830406589</b><b>1,16317004258</b><span>TURKEY</span><span>TÜRKİYE</span></div>
<div class="r"><i>5</i><b>26</b><b>5</b><span>AKSARAY</span><span>AKSARAY</span><span>TUR068</span><b>4,43250892315</b><b>0,790387608376</b><span>TURKEY</span><span>TÜRKİYE</span></div>
<div class="r"><i>6</i><b>28</b><b>6</b><span>AMASYA</span><span>AMASYA</span><span>TUR005</span><b>4,90440261243</b><b>0,599725469809</b><span>TURKEY</span><span>TÜRKİYE</span></div>
<div class="r"><i>7</i><b>2</b><b>7</b><span>ANKARA</span><span>ANKARA</span><span>TUR006</span><b>11,8229142607</b><b>2,69568574439</b><span>TURKEY</span><span>TÜRKİYE</span></div>
<div class="r"><i>8</i><b>5</b><b>8</b><span>ANTALYA</span><span>ANTALYA</span><span>TUR007</span><b>11,9354034826</b><b>2,03826190009</b><span>TURKEY</span><span>TÜRKİYE</span></div>
<div class="r last"><i></i><b></b><b></b><span></span><span></span><span></span><b></b><b></b><span></span><span></span></div>
</div>
<div class="vs gvs"><b><svg><use href="#tu"/></svg></b><i class="slide"></i><i class="trough z"></i><b><svg><use href="#td"/></svg></b></div>
</div>
<div class="hs"><b><svg><use href="#tl"/></svg></b><i class="slide"></i><i class="trough"></i><b><svg><use href="#tr"/></svg></b><i class="corner"></i></div>
<div class="foot"><div class="btn"><svg class="i20"><use href="#tab"/></svg>Tüm Detayları Göster<svg class="bd"><use href="#td"/></svg></div><svg class="i18"><use href="#form"/></svg><b class="on"><svg class="i18"><use href="#tab"/></svg></b></div>
</section>

<section class="right">
<div class="dockh"><span>İşlem Araç Kutusu</span><svg><use href="#flt"/></svg><svg><use href="#cls"/></svg></div>
<div class="mini proc"><svg><use href="#gears"/></svg><svg><use href="#pyd"/></svg><svg><use href="#clk2"/></svg><svg><use href="#doc"/></svg><i class="sep"></i><svg><use href="#edn"/></svg><i class="sep"></i><svg><use href="#wrench"/></svg></div>
<div class="psearch"><svg class="i18"><use href="#mag"/></svg><span>export to pos</span><svg class="clr" viewBox="0 0 17 12"><path d="M5 0h12v12H5L0 6z" fill="#8c8c8c"/><path d="M7.500 3l6 6M13.500 3l-6 6" stroke="#fff" stroke-width="1.500"/></svg></div>
<ul class="plist">
<li><svg class="tw"><use href="#tr"/></svg><svg class="i20"><use href="#clk2"/></svg>En son kullanılan</li>
<li><svg class="tw"><use href="#tr"/></svg><svg class="i18"><use href="#qgis"/></svg>Cartography</li>
<li><svg class="tw"><use href="#tr"/></svg><svg class="i18"><use href="#qgis"/></svg>Database</li>
</ul>
</section>
</main>

<div class="status">
<div class="find"><svg class="i18"><use href="#mag"/></svg>Bulmak için yazın (Ctrl+K)</div>
<span class="msg">Güncel katmanın düzenleme durumunu değiştirin</span>
<span class="lb">Koordinat</span><div class="box coord">39,1°&nbsp; 39,13°</div><svg class="i20 ext"><use href="#ext"/></svg>
<span class="lb">Ölçek</span><div class="box scale"><span>1:6461265</span><b><svg><use href="#td"/></svg></b></div><svg class="i20 lk"><use href="#lock"/></svg>
<span class="lb">Büyüteç</span><div class="box spin"><span>100%</span><b><svg><use href="#tu"/></svg><svg><use href="#td"/></svg></b></div>
<span class="lb rot">Döndürme</span><div class="box spin"><span>0,0°</span><b><svg><use href="#tu"/></svg><svg><use href="#td"/></svg></b></div>
<i class="cb">✓</i><span class="lb gor">Görüntüle</span><svg class="i20 crs"><use href="#crs"/></svg><span class="epsg">EPSG:4326</span><svg class="i20 chat"><use href="#chat"/></svg>
</div>

<footer class="task">
<svg class="wx"><use href="#wx"/></svg><svg class="start"><use href="#win"/></svg>
<div class="tsearch"><svg class="i20"><use href="#mag"/></svg><span>Ara</span><svg class="beach"><use href="#beach"/></svg></div>
<div class="apps"><i><svg><use href="#teams"/></svg></i><i><svg><use href="#edge"/></svg></i><i><svg><use href="#store"/></svg></i><i><svg><use href="#mail"/></svg></i><i><svg><use href="#ppt"/></svg></i><i class="run"><svg><use href="#expl"/></svg></i><i><svg><use href="#yt"/></svg></i><i class="run"><svg><use href="#chr"/></svg></i><i class="act"><svg><use href="#qgis"/></svg></i><i class="run"><svg><use href="#pgt"/></svg></i><i class="run"><svg><use href="#cmd"/></svg></i><i class="run redb"><svg><use href="#snip"/></svg></i><i class="run"><svg><use href="#phot"/></svg></i><i class="run"><svg><use href="#note"/></svg></i><i class="run"><svg><use href="#gh"/></svg></i><i class="run"><svg><use href="#term"/></svg></i></div>
<div class="tray"><svg viewBox="0 0 24 24"><path d="M5 15.500l7-7 7 7" fill="none" stroke="#fff" stroke-width="2"/></svg><svg><use href="#wifi"/></svg><svg><use href="#mute"/></svg><svg><use href="#bat"/></svg><div class="time">17:11<br>28.09.2024</div><svg><use href="#bell"/></svg><svg class="cop"><use href="#cop"/></svg></div>
</footer>
<div class="watermark"><div>Windows'u Etkinleştir</div><p>Windows'u etkinleştirmek için Ayarlar'a gidin.</p></div>
</body>
</html>
```
FILE: styles.css
```css
* { box-sizing: border-box; }
body { margin: 0; width: 1920px; height: 1080px; overflow: hidden; display: flex; flex-direction: column; background: #efefef; color: #000; font: 14px/18px "Open Sans", "Noto Sans", sans-serif; white-space: nowrap; position: relative; }
ul, p { margin: 0; padding: 0; list-style: none; }
svg { display: block; flex: none; overflow: visible; }
i { font-style: normal; }
b { font-weight: 400; }
.grads { position: absolute; }
.sprite { display: none; }
.gl { font-family: "Open Sans", sans-serif; fill: #333; }
.b { font-weight: 700; }
.red { fill: #e00; }
.ser { font-family: "Liberation Serif", serif; font-style: italic; font-weight: 700; fill: #fff; }
.n { font-style: normal; font-weight: 400; }
.eps { fill: #5a3068; font-style: normal; }
.i20 { width: 20px; height: 20px; }
.i18 { width: 18px; height: 18px; }
.off { opacity: .32; filter: grayscale(.6); }
.off2 { opacity: .5; }
.on { display: flex; align-items: center; justify-content: center; background: #dcdcdc; border: 1px solid #a6a6a6; border-radius: 3px; }

.title { height: 29px; flex: none; display: flex; align-items: center; padding-left: 2px; padding-bottom: 1px; gap: 6px; background: linear-gradient(90deg, #f0f3f9, #f3f2f6 60%, #eef3f6 85%, #f1f3f7); }
.title span { font-size: 14px; letter-spacing: 0; }
.caps { margin-left: auto; display: flex; gap: 45px; padding-right: 25px; }
.caps svg { width: 14px; height: 14px; }
.menu { height: 26px; flex: none; display: grid; align-items: center; padding-left: 13px; padding-top: 1px; letter-spacing: -.1px; border-bottom: 2px solid #d6d6d6; grid-template-columns: 52px 71px 71px 68px 65px 78px 61px 59px 85px 48px 87px 61px 60px; }
.menu u { text-underline-offset: 2px; }
.bar { flex: none; display: grid; align-items: center; padding-left: 6px; height: 48px; background: linear-gradient(#fbfbfb, #efefef); border-bottom: 1px solid #b0b0b0; }
.bar > svg { width: 30px; height: 30px; padding: 1px; }
.bar svg.grip { width: 6px; height: 22px; padding: 0; }
.bar svg.dd { width: 12px; height: 12px; padding: 0; }
.bar .on { width: 40px; height: 39px; }
.bar .on svg { width: 28px; height: 28px; }
.sep { width: 1px; height: 24px; background: #cfcfcf; }
.bar1 { grid-template-columns: 15px 41px 42px 41px 41px 42px 46px 10px 46px 41px 41px 43px 40px 41px 42px 41px 41px 42px 41px 43px 39px 41px 42px 45px 17px 35px 21px 35px 20px 36px 21px 36px 25px 15px 41px 36px 47px 41px 37px 19px 36px 20px 42px 36px 12px; }
.bar2 { height: 49px; padding-top: 2px; grid-template-columns: 15px 42px 42px 40px 43px 40px 41px 46px 16px 39px 43px 41px 36px 21px 40px 36px 21px 39px 43px 41px 42px 41px 41px 45px 14px 44px 39px 10px 40px 42px 10px 41px 41px 42px 42px 44px 16px 46px 15px 47px 16px 44px 16px 46px 6px; }

main { height: 833px; flex: none; display: flex; }
.left { width: 367px; }
.center { width: 1164px; margin-left: 8px; }
.right { width: 372px; margin-left: 9px; display: flex; flex-direction: column; }
.dockh { height: 28px; display: flex; align-items: center; gap: 4px; padding: 0 2px 0 5px; }
.dockh span { flex: 1; }
.dockh svg { width: 14px; height: 14px; }
.left .dockh { padding-right: 1px; }
.mini { height: 36px; display: grid; align-items: center; padding-bottom: 5px; }
.mini > svg { width: 20px; height: 20px; }
.mini svg.dd { width: 12px; height: 12px; }
.mini .sep { height: 16px; }
.browse { padding-left: 10px; grid-template-columns: 31px 32px 31px 31px 20px; }
.treebox { height: 487px; display: flex; border: 1px solid #b4b4b4; border-width: 1px 1px 0; background: #fff; }
.tree { flex: 1; overflow: hidden; }
.tree li { height: 22.53px; display: flex; align-items: center; }
.tw { width: 12px; height: 12px; margin: 0 8px 0 4px; padding: 1px; flex: none; }
.tree .i20 { margin-right: 7px; }
.tree .l1 { padding-left: 20px; }
.tree .l2 { padding-left: 40px; }
.tree .hov { background: #efefef; width: 227px; }
.vs { width: 17px; display: flex; flex-direction: column; border-left: 1px solid #c8c8c8; background: #fff; flex: none; }
.vs b, .hs b { display: flex; align-items: center; justify-content: center; background: #fafafa; }
.vs svg, .hs svg { width: 11px; height: 11px; }
.vs b { height: 17px; border-bottom: 1px solid #bbb; flex: none; }
.vs b:last-child { border: 0; border-top: 1px solid #aaa; }
.trough { background: #e4e4e4; border: 1px solid #c4c4c4; border-width: 0 0 1px; }
.vs .slide { background: linear-gradient(90deg, #f0f0f0, #fff); }
.tvs .a { height: 180px; }
.tvs .slide { flex: 1; }
.tvs .z { height: 35px; border-width: 1px 0 0; }
.dots { height: 6px; display: flex; align-items: center; justify-content: center; }
.dots::after { content: ""; width: 22px; height: 2px; background: repeating-linear-gradient(90deg, #b8b8b8 0 2px, transparent 2px 4px); }
.layers { padding-left: 9px; grid-template-columns: 32px 32px 32px 31px 26px 20px 32px 31px 20px; }
.laylist { height: 212px; background: #fff; border: 1px solid #b4b4b4; border-top: 0; padding-top: 2px; }
.laylist li { height: 22.5px; display: flex; align-items: center; font-weight: 700; letter-spacing: -.45px; }
.laylist .i20 { margin: 0 7px 0 8px; }
.laylist .i20.v { margin-left: 6px; }
.laylist em { color: #7c7c7c; font-size: 14.5px; letter-spacing: .15px; }
.laylist u { letter-spacing: -.02px; }
.laylist .tw { margin-left: 6px; margin-right: 6px; }
.laylist .tw + .cb { margin-left: 5px; }
.cb { width: 18px; height: 18px; background: #fff; border: 1px solid #bdbdbd; font: 700 17px/16px "DejaVu Sans", sans-serif; text-align: center; color: #000; letter-spacing: 0; flex: none; }
.laylist .sel { background: #0a7fe0; color: #fff; }
.warn { width: 21px; height: 20px; margin-left: auto; margin-right: 5px; border: 1px solid #ddd; background: #f7f7f7; }

.canvas { height: 379px; background: #fff; border: 1px solid #b4b4b4; border-width: 0 0 1px 1px; }
.prov { stroke: #222; stroke-width: 3.3; stroke-linejoin: round; }
.isl { fill: #333; stroke-width: 4; }
.maplab { font: 48px "Open Sans", sans-serif; fill: #323232; }
.mid { height: 7px; padding-bottom: 2px; }
.tabh { height: 27px; padding-left: 9px; letter-spacing: .05px; }
.attr { height: 38px; padding: 0 0 4px 9px; grid-template-columns: 32px 31px 32px 30px 10px 30px 32px 32px 31px 30px 10px 31px 31px 32px 31px 31px 31px 31px 31px 10px 31px 31px 31px 30px 10px 30px 10px 27px 31px; }
.attr .on { width: 31px; height: 30px; }
.attr .on svg { width: 20px; height: 20px; }
.grid { display: flex; height: 327px; }
.rows { width: 1147px; overflow: hidden; border-left: 1px solid #b4b4b4; background: #fff; }
.r { display: grid; grid-template-columns: 23px 124px repeat(7, 125px) 124px; height: 37.5px; }
.r > * { border-right: 1px solid #c6c6c6; border-bottom: 1px solid #c6c6c6; padding: 0 4px; display: flex; align-items: center; letter-spacing: -.1px; }
.r > span { padding-left: 5px; }
.r > b { justify-content: flex-end; padding-right: 3px; }
.r > i { background: linear-gradient(#fbfbfb, #ececec); border-color: #aaa; padding: 3px 0 0 3px; }
.r:nth-child(odd):not(.h) > b, .r:nth-child(odd):not(.h) > span { background: #e8e7e3; }
.h { height: 25px; background: linear-gradient(#fcfcfc, #eaeaea); }
.h > * { background: none; justify-content: center; border-bottom-color: #a4a4a4; }
.h > span { padding: 1px 0 0 1px; position: relative; letter-spacing: .05px; }
.h > .sorted { padding-right: 15px; }
.srt { position: absolute; width: 11px; height: 11px; right: 5px; top: 5px; }
.r.last > b, .r.last > span { background: #fff; }
.gvs { width: 17px; border-right: 1px solid #c4c4c4; border-left: 0; }
.gvs .slide { height: 32px; }
.gvs .trough { flex: 1; border-width: 1px 0 0; }
.gvs b:last-child { height: 19px; }
.hs { height: 18px; display: flex; border: 1px solid #c4c4c4; border-width: 1px 0 0 1px; }
.hs b { width: 17px; border-right: 1px solid #c4c4c4; }
.hs .slide { width: 905px; background: linear-gradient(#fff, #efefef); }
.hs .trough { width: 207px; border: 1px solid #bbb; border-width: 0 0 0 1px; }
.hs .corner { width: 17px; border: 1px solid #c4c4c4; border-width: 0 1px 1px 0; }
.foot { display: flex; align-items: center; padding: 5px 3px 0 4px; height: 34px; }
.btn { width: 159px; height: 29px; border: 1px solid #a6a6a6; border-radius: 3px; background: linear-gradient(#fff, #efefef); display: flex; align-items: center; padding-left: 4px; gap: 5px; font-size: 12.5px; letter-spacing: -.4px; position: relative; margin-right: auto; }
.btn .i20 { width: 17px; height: 18px; }
.bd { position: absolute; right: 2px; bottom: 2px; width: 8px; height: 8px; }
.foot > .i18 { margin-right: 6px; }
.foot .on { width: 30px; height: 29px; }

.proc { padding-left: 10px; grid-template-columns: 31px 31px 31px 31px 9px 31px 9px 20px; }
.psearch { height: 27px; border: 1px solid #b0b0b0; border-radius: 3px; background: #fff; display: flex; align-items: center; padding: 0 10px 0 8px; color: #888; }
.psearch span { margin-left: 9px; flex: 1; color: #000; font-size: 12.5px; letter-spacing: -.25px; }
.clr { width: 17px; height: 12px; }
.plist { flex: 1; background: #fff; border-bottom: 1px solid #b4b4b4; padding-top: 2px; }
.plist li { height: 22.5px; display: flex; align-items: center; padding-left: 3px; }
.plist svg.i20, .plist svg.i18 { width: 19px; height: 19px; margin: 0 7px 0 4px; }

.status { height: 35px; flex: none; display: flex; align-items: center; padding: 1px 0 0 5px; font-size: 12.8px; letter-spacing: -.25px; }
.find { width: 256px; height: 28px; border: 1px solid #b0b0b0; border-radius: 3px; background: #fff; display: flex; align-items: center; gap: 8px; padding-left: 9px; color: #7a7a7a; font-size: 12.5px; letter-spacing: -.1px; }
.msg { width: 662px; margin-left: 10px; font-size: 13px; letter-spacing: -.1px; }
.box { height: 28px; border: 1px solid #b0b0b0; border-radius: 3px; background: #fff; display: flex; align-items: center; }
.coord { width: 110px; margin-left: 4px; justify-content: center; letter-spacing: .05px; }
.msg + .lb { width: 58px; }
.ext { margin: 0 18px 0 4px; }
.scale { width: 96px; margin-left: 4px; }
.scale span { width: 70px; }
.scale b { flex: 1; align-self: stretch; border-left: 1px solid #b0b0b0; display: flex; align-items: center; justify-content: center; }
.scale svg { width: 11px; height: 11px; }
.ext + .lb { width: 33px; }
.lk { margin: 0 9px 0 13px; }
.lk + .lb { width: 49px; }
.spin { width: 101px; margin-left: 3px; padding-left: 5px; }
.spin span { flex: 1; }
.spin b { width: 19px; align-self: stretch; border-left: 1px solid #b0b0b0; display: flex; flex-direction: column; align-items: center; justify-content: center; gap: 1px; }
.spin svg { width: 11px; height: 11px; }
.rot { width: 63px; margin-left: 11px; }
.rot + .spin { margin-left: 11px; }
.status .cb { width: 17px; height: 17px; margin-left: 10px; font-size: 15px; line-height: 15px; }
.gor { width: 60px; margin-left: 7px; }
.crs { margin: 0 2px 0 18px; }
.epsg { width: 68px; letter-spacing: -.2px; }
.chat { margin-left: auto; margin-right: 9px; }

.task { height: 60px; flex: none; background: #2a2a2a; border-top: 1px solid #444; display: flex; align-items: center; color: #fff; }
.wx { width: 36px; height: 40px; margin-left: 27px; margin-top: -8px; }
.start { width: 30px; height: 30px; margin-left: 254px; }
.tsearch { width: 275px; height: 40px; margin-left: 17px; border: 1px solid #555; border-radius: 20px; background: #454545; display: flex; align-items: center; padding-left: 14px; gap: 12px; font-size: 16px; color: #ddd; }
.beach { width: 64px; height: 32px; margin-left: 120px; }
.apps { display: flex; margin-left: 5px; }
.apps i { width: 50px; height: 50px; margin-right: 5px; display: flex; align-items: center; justify-content: center; border-radius: 5px; position: relative; }
.apps svg { width: 30px; height: 30px; }
.run::after { content: ""; position: absolute; width: 8px; height: 4px; border-radius: 2px; background: #9a9a9a; bottom: 1px; left: 21px; }
.apps .act { background: #383838; box-shadow: inset 0 0 0 1px #404040; }
.apps .redb { background: #7d4147; }
.redb::after { background: #ff9aa2; }
.tray { flex: 1; display: flex; align-items: center; position: relative; padding-left: 79px; }
.tray svg { width: 20px; height: 20px; margin-right: 10px; }
.tray svg:first-child { margin-right: 20px; }
.time { margin-left: 3px; width: 80px; text-align: right; font-size: 14px; line-height: 20px; letter-spacing: .05px; padding-right: 1px; }
.tray .time + svg { width: 22px; height: 22px; margin: 0 17px 0 9px; }
.tray .cop { width: 32px; height: 32px; margin: 0; }
.watermark { position: absolute; left: 1486px; top: 914px; color: rgba(125, 125, 125, .55); }
.watermark div { font-size: 23.5px; line-height: 34px; letter-spacing: .05px; }
.watermark p { font-size: 17px; line-height: 26px; letter-spacing: -.03px; }
```
